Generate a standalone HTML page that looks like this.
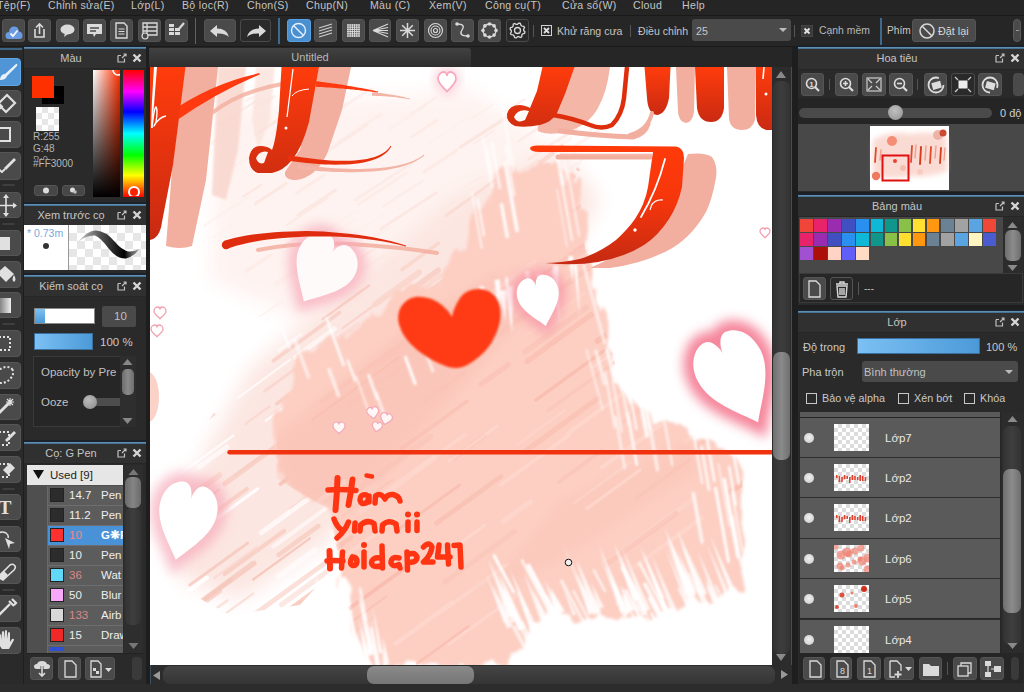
<!DOCTYPE html><html><head><meta charset="utf-8"><style>
html,body{margin:0;padding:0}
body{width:1024px;height:692px;overflow:hidden;position:relative;background:#1e1e1e;font-family:"Liberation Sans",sans-serif}
div{box-sizing:border-box}
svg{overflow:visible}
</style></head><body><div style="position:absolute;left:0px;top:0px;width:1024px;height:15px;background:#252525"></div><div style="position:absolute;left:0px;top:15px;width:1024px;height:1px;background:#1a1a1a"></div><div style="position:absolute;left:-3px;top:-1.17px;font-size:10.6px;line-height:12.19px;color:#c4c4c4;white-space:nowrap;letter-spacing:0.3px">Tệp(F)</div><div style="position:absolute;left:48px;top:-1.17px;font-size:10.6px;line-height:12.19px;color:#c4c4c4;white-space:nowrap;letter-spacing:0.3px">Chỉnh sửa(E)</div><div style="position:absolute;left:131px;top:-1.17px;font-size:10.6px;line-height:12.19px;color:#c4c4c4;white-space:nowrap;letter-spacing:0.3px">Lớp(L)</div><div style="position:absolute;left:182px;top:-1.17px;font-size:10.6px;line-height:12.19px;color:#c4c4c4;white-space:nowrap;letter-spacing:0.3px">Bộ lọc(R)</div><div style="position:absolute;left:247px;top:-1.17px;font-size:10.6px;line-height:12.19px;color:#c4c4c4;white-space:nowrap;letter-spacing:0.3px">Chọn(S)</div><div style="position:absolute;left:306px;top:-1.17px;font-size:10.6px;line-height:12.19px;color:#c4c4c4;white-space:nowrap;letter-spacing:0.3px">Chụp(N)</div><div style="position:absolute;left:370px;top:-1.17px;font-size:10.6px;line-height:12.19px;color:#c4c4c4;white-space:nowrap;letter-spacing:0.3px">Màu (C)</div><div style="position:absolute;left:429px;top:-1.17px;font-size:10.6px;line-height:12.19px;color:#c4c4c4;white-space:nowrap;letter-spacing:0.3px">Xem(V)</div><div style="position:absolute;left:485px;top:-1.17px;font-size:10.6px;line-height:12.19px;color:#c4c4c4;white-space:nowrap;letter-spacing:0.3px">Công cụ(T)</div><div style="position:absolute;left:562px;top:-1.17px;font-size:10.6px;line-height:12.19px;color:#c4c4c4;white-space:nowrap;letter-spacing:0.3px">Cửa sổ(W)</div><div style="position:absolute;left:633px;top:-1.17px;font-size:10.6px;line-height:12.19px;color:#c4c4c4;white-space:nowrap;letter-spacing:0.3px">Cloud</div><div style="position:absolute;left:682px;top:-1.17px;font-size:10.6px;line-height:12.19px;color:#c4c4c4;white-space:nowrap;letter-spacing:0.3px">Help</div><div style="position:absolute;left:0px;top:16px;width:1024px;height:30px;background:#262626"></div><div style="position:absolute;left:0px;top:46px;width:1024px;height:1px;background:#1a1a1a"></div><div style="position:absolute;left:2px;top:19px;width:23px;height:23px;background:#4a4a4a;border:1px solid #545454;border-radius:3px"><svg width="21" height="21" viewBox="0 0 21 21" style="position:absolute;left:0;top:0"><path d="M5.5 19 Q2.5 19 2.5 15.5 Q2.5 12 6 12 Q6.5 6.5 11 6.5 Q15.5 6.5 16 11.5 Q19.5 12 19.5 15.5 Q19.5 19 16.5 19 Z" fill="#6a9ae0"/><path d="M7.5 13.5 L10 16 L14.5 10.5" stroke="#f0f4ff" stroke-width="1.9" fill="none"/></svg></div><div style="position:absolute;left:28px;top:19px;width:23px;height:23px;background:#4a4a4a;border:1px solid #545454;border-radius:3px"><svg width="21" height="21" viewBox="0 0 21 21" style="position:absolute;left:0;top:0"><path d="M6 9 V17 H15 V9" stroke="#dadada" stroke-width="1.6" fill="none"/><path d="M10.5 14 V4 M7 7.5 L10.5 4 L14 7.5" stroke="#dadada" stroke-width="1.6" fill="none"/></svg></div><div style="position:absolute;left:56px;top:19px;width:23px;height:23px;background:#4a4a4a;border:1px solid #545454;border-radius:3px"><svg width="21" height="21" viewBox="0 0 21 21" style="position:absolute;left:0;top:0"><ellipse cx="10.5" cy="9.5" rx="7" ry="5" fill="#dadada"/><path d="M8 13 L7 17 L11 14" fill="#dadada"/></svg></div><div style="position:absolute;left:83px;top:19px;width:23px;height:23px;background:#4a4a4a;border:1px solid #545454;border-radius:3px"><svg width="21" height="21" viewBox="0 0 21 21" style="position:absolute;left:0;top:0"><path d="M3 4 H18 V14 H12 L10 17 L9 14 H3 Z" fill="#dadada"/><path d="M6 8 H15 M6 11 H12" stroke="#4a4a4a" stroke-width="1.4"/></svg></div><div style="position:absolute;left:110px;top:19px;width:23px;height:23px;background:#4a4a4a;border:1px solid #545454;border-radius:3px"><svg width="21" height="21" viewBox="0 0 21 21" style="position:absolute;left:0;top:0"><path d="M5 3 H13 L16 6 V18 H5 Z" stroke="#dadada" stroke-width="1.4" fill="none"/><path d="M7.5 9 H13.5 M7.5 11.5 H13.5 M7.5 14 H13.5" stroke="#dadada" stroke-width="1.2"/></svg></div><div style="position:absolute;left:138px;top:19px;width:23px;height:23px;background:#4a4a4a;border:1px solid #545454;border-radius:3px"><svg width="21" height="21" viewBox="0 0 21 21" style="position:absolute;left:0;top:0"><path d="M4 3 H18 V15 H4 Z M4 7 H18 M4 11 H18 M8 3 V15" stroke="#dadada" stroke-width="1.3" fill="none"/><circle cx="6" cy="16" r="3" stroke="#dadada" stroke-width="1.2" fill="#4a4a4a"/></svg></div><div style="position:absolute;left:165px;top:19px;width:23px;height:23px;background:#4a4a4a;border:1px solid #545454;border-radius:3px"><svg width="21" height="21" viewBox="0 0 21 21" style="position:absolute;left:0;top:0"><path d="M3 8 H8 V11 H3 Z M9 8 H14 V11 H9 Z M3 12 H8 V15 H3 Z M9 12 H14 V15 H9 Z M3 4 H8 V7 H3 Z" fill="#dadada"/><path d="M12 10 L18 3" stroke="#dadada" stroke-width="2.2"/></svg></div><div style="position:absolute;left:195px;top:18px;width:1px;height:26px;background:#3f6a90"></div><div style="position:absolute;left:204px;top:19px;width:32px;height:23px;background:#4a4a4a;border:1px solid #545454;border-radius:3px"><svg width="30" height="21" viewBox="0 0 30 21" style="position:absolute;left:0;top:0"><path d="M5 11 L12 5 V8.5 Q22 8.5 24 17 Q20 13 12 13.5 V17 Z" fill="#dadada"/></svg></div><div style="position:absolute;left:240px;top:19px;width:31px;height:23px;background:#2a2a2a;border:1px solid #4a4a4a;border-radius:3px"><svg width="29" height="21" viewBox="0 0 29 21" style="position:absolute;left:0;top:0"><path d="M25 11 L18 5 V8.5 Q8 8.5 6 17 Q10 13 18 13.5 V17 Z" fill="#dadada"/></svg></div><div style="position:absolute;left:278px;top:18px;width:2px;height:26px;background:#3f6a90"></div><div style="position:absolute;left:287px;top:19px;width:24px;height:23px;background:#4a90d0;border:1px solid #5aa0e0;border-radius:3px"><svg width="22" height="21" viewBox="0 0 22 21" style="position:absolute;left:0;top:0"><circle cx="10.5" cy="10.5" r="7" stroke="#e8f0ff" stroke-width="1.4" fill="none"/><path d="M5.5 5.5 L15.5 15.5" stroke="#e8f0ff" stroke-width="1.4"/></svg></div><div style="position:absolute;left:314px;top:19px;width:23px;height:23px;background:#4a4a4a;border:1px solid #545454;border-radius:3px"><svg width="21" height="21" viewBox="0 0 21 21" style="position:absolute;left:0;top:0"><path d="M4 8 L17 4 M4 11 L17 7 M4 14 L17 10 M4 17 L17 13" stroke="#cfcfcf" stroke-width="1.3"/></svg></div><div style="position:absolute;left:342px;top:19px;width:23px;height:23px;background:#4a4a4a;border:1px solid #545454;border-radius:3px"><svg width="21" height="21" viewBox="0 0 21 21" style="position:absolute;left:0;top:0"><path d="M5.0 4 V17" stroke="#dadada" stroke-width="1"/><path d="M7.2 4 V17" stroke="#dadada" stroke-width="1"/><path d="M9.4 4 V17" stroke="#dadada" stroke-width="1"/><path d="M11.600000000000001 4 V17" stroke="#dadada" stroke-width="1"/><path d="M13.8 4 V17" stroke="#dadada" stroke-width="1"/><path d="M16.0 4 V17" stroke="#dadada" stroke-width="1"/><path d="M4 5.0 H17" stroke="#dadada" stroke-width="1"/><path d="M4 7.2 H17" stroke="#dadada" stroke-width="1"/><path d="M4 9.4 H17" stroke="#dadada" stroke-width="1"/><path d="M4 11.600000000000001 H17" stroke="#dadada" stroke-width="1"/><path d="M4 13.8 H17" stroke="#dadada" stroke-width="1"/><path d="M4 16.0 H17" stroke="#dadada" stroke-width="1"/></svg></div><div style="position:absolute;left:369px;top:19px;width:22px;height:23px;background:#4a4a4a;border:1px solid #545454;border-radius:3px"><svg width="20" height="21" viewBox="0 0 20 21" style="position:absolute;left:0;top:0"><path d="M3 10.5 L18 4 M3 10.5 L18 7.5 M3 10.5 L18 10.5 M3 10.5 L18 13.5 M3 10.5 L18 17" stroke="#dadada" stroke-width="1.1"/></svg></div><div style="position:absolute;left:396px;top:19px;width:23px;height:23px;background:#4a4a4a;border:1px solid #545454;border-radius:3px"><svg width="21" height="21" viewBox="0 0 21 21" style="position:absolute;left:0;top:0"><path d="M10.5 3 V18 M3 10.5 H18 M5.2 5.2 L15.8 15.8 M15.8 5.2 L5.2 15.8" stroke="#dadada" stroke-width="1.5"/></svg></div><div style="position:absolute;left:424px;top:19px;width:23px;height:23px;background:#4a4a4a;border:1px solid #545454;border-radius:3px"><svg width="21" height="21" viewBox="0 0 21 21" style="position:absolute;left:0;top:0"><circle cx="10.5" cy="10.5" r="7" stroke="#dadada" stroke-width="1.1" fill="none"/><circle cx="10.5" cy="10.5" r="4.5" stroke="#dadada" stroke-width="1.1" fill="none"/><circle cx="10.5" cy="10.5" r="2" stroke="#dadada" stroke-width="1.1" fill="none"/></svg></div><div style="position:absolute;left:451px;top:19px;width:23px;height:23px;background:#4a4a4a;border:1px solid #545454;border-radius:3px"><svg width="21" height="21" viewBox="0 0 21 21" style="position:absolute;left:0;top:0"><path d="M5 4 Q14 4 10 10 Q6 16 16 16" stroke="#dadada" stroke-width="1.3" fill="none"/><circle cx="5" cy="4" r="1.8" fill="#dadada"/><circle cx="16" cy="16" r="1.8" fill="#dadada"/></svg></div><div style="position:absolute;left:478px;top:19px;width:23px;height:23px;background:#4a4a4a;border:1px solid #545454;border-radius:3px"><svg width="21" height="21" viewBox="0 0 21 21" style="position:absolute;left:0;top:0"><circle cx="10.5" cy="10.5" r="6.5" stroke="#dadada" stroke-width="1.3" fill="none"/><circle cx="17.00" cy="10.50" r="1.8" fill="#dadada"/><circle cx="15.10" cy="15.10" r="1.8" fill="#dadada"/><circle cx="10.50" cy="17.00" r="1.8" fill="#dadada"/><circle cx="5.90" cy="15.10" r="1.8" fill="#dadada"/><circle cx="4.00" cy="10.50" r="1.8" fill="#dadada"/><circle cx="5.90" cy="5.90" r="1.8" fill="#dadada"/><circle cx="10.50" cy="4.00" r="1.8" fill="#dadada"/><circle cx="15.10" cy="5.90" r="1.8" fill="#dadada"/></svg></div><div style="position:absolute;left:506px;top:19px;width:23px;height:23px;background:#2a2a2a;border:1px solid #4a4a4a;border-radius:3px"><svg width="21" height="21" viewBox="0 0 21 21" style="position:absolute;left:0;top:0"><path d="M16.70 10.50 L17.95 11.98 L17.52 13.41 L15.66 13.94 L14.88 14.88 L14.72 16.82 L13.41 17.52 L11.71 16.58 L10.50 16.70 L9.02 17.95 L7.59 17.52 L7.06 15.66 L6.12 14.88 L4.18 14.72 L3.48 13.41 L4.42 11.71 L4.30 10.50 L3.05 9.02 L3.48 7.59 L5.34 7.06 L6.12 6.12 L6.28 4.18 L7.59 3.48 L9.29 4.42 L10.50 4.30 L11.98 3.05 L13.41 3.48 L13.94 5.34 L14.88 6.12 L16.82 6.28 L17.52 7.59 L16.58 9.29 Z" stroke="#dadada" stroke-width="1.3" fill="none" stroke-linejoin="round"/><circle cx="10.5" cy="10.5" r="3" stroke="#dadada" stroke-width="1.3" fill="none"/></svg></div><div style="position:absolute;left:533px;top:25px;width:1px;height:12px;background:#555"></div><div style="position:absolute;left:541px;top:25px;width:11px;height:11px;border:1px solid #cfcfcf;background:#2b2b2b"><svg width="9" height="9" style="position:absolute;left:0;top:0"><path d="M2 2 L7 7 M7 2 L2 7" stroke="#e0e0e0" stroke-width="1.8"/></svg></div><div style="position:absolute;left:557px;top:25px;font-size:10.6px;line-height:12.19px;color:#c4c4c4;white-space:nowrap;">Khử răng cưa</div><div style="position:absolute;left:630px;top:25px;width:1px;height:12px;background:#555"></div><div style="position:absolute;left:638px;top:25px;font-size:10.6px;line-height:12.19px;color:#c4c4c4;white-space:nowrap;">Điều chỉnh</div><div style="position:absolute;left:692px;top:19px;width:99px;height:22px;background:#4a4a4a;border-radius:3px"></div><div style="position:absolute;left:696px;top:25px;font-size:10.6px;line-height:12.19px;color:#c8c8c8;white-space:nowrap;">25</div><svg style="position:absolute;left:779px;top:28px;" width="8" height="5" viewBox="0 0 8 5"><path d="M0 0 H8 L4 4 Z" fill="#bdbdbd"/></svg><div style="position:absolute;left:794px;top:25px;width:1px;height:12px;background:#555"></div><div style="position:absolute;left:801px;top:25px;width:12px;height:12px;background:#3a3a3a;border:1px solid #444"><svg width="10" height="10" style="position:absolute;left:0;top:0"><path d="M2.5 2.5 L7.5 7.5 M7.5 2.5 L2.5 7.5" stroke="#e6e6e6" stroke-width="1.8"/></svg></div><div style="position:absolute;left:819px;top:25px;font-size:10.4px;line-height:11.96px;color:#b8b8b8;white-space:nowrap;">Cạnh mềm</div><div style="position:absolute;left:880px;top:18px;width:2px;height:27px;background:#3f6a90"></div><div style="position:absolute;left:887px;top:25px;font-size:10.2px;line-height:11.73px;color:#d0c8c0;white-space:nowrap;">Phím</div><div style="position:absolute;left:912px;top:19px;width:64px;height:23px;background:#4a4a4a;border-radius:3px;border:1px solid #555"><svg width="20" height="20" style="position:absolute;left:4px;top:1px"><circle cx="10" cy="10" r="7" stroke="#d8d8d8" stroke-width="1.5" fill="none"/><path d="M5 5 L15 15" stroke="#d8d8d8" stroke-width="1.5"/></svg></div><div style="position:absolute;left:938px;top:25px;font-size:10.8px;line-height:12.42px;color:#d8d8d8;white-space:nowrap;">Đặt lại</div><div style="position:absolute;left:1013px;top:19px;width:8px;height:23px;background:#4a4a4a;border-radius:4px;border:1px solid #5a5a5a"><div style="position:absolute;left:2px;top:10px;width:3px;height:1px;background:#999"></div></div><div style="position:absolute;left:0px;top:47px;width:23px;height:637px;background:#2a2a2a"></div><div style="position:absolute;left:0px;top:48px;width:22px;height:2px;background:#3d6585"></div><div style="position:absolute;left:-8px;top:58px;width:29px;height:28px;background:#5095d5;border:1px solid #60a5e5;border-radius:4px"><svg width="29" height="28" viewBox="-8 0 29 28" style="position:absolute;left:-1px;top:-1px"><path d="M0 21 Q1 16 5 16 L16 6 Q18 5 17 8 L7 18 Q6 22 0 22 Z" fill="#e8f0f8"/></svg></div><div style="position:absolute;left:-8px;top:90px;width:29px;height:27px;background:#4a4a4a;border:1px solid #555;border-radius:4px"><svg width="29" height="27" viewBox="-8 0 29 27" style="position:absolute;left:-1px;top:-1px"><path d="M-2 14 L7 5 L15 13 L6 22 Z" stroke="#e0e0e0" stroke-width="2.2" fill="none"/><path d="M-2 14 L2 18" stroke="#e0e0e0" stroke-width="4"/></svg></div><div style="position:absolute;left:-8px;top:121px;width:29px;height:27px;background:#4a4a4a;border:1px solid #555;border-radius:4px"><svg width="29" height="27" viewBox="-8 0 29 27" style="position:absolute;left:-1px;top:-1px"><rect x="-5" y="7" width="15" height="13" stroke="#e0e0e0" stroke-width="2" fill="none"/></svg></div><div style="position:absolute;left:-8px;top:152px;width:29px;height:28px;background:#4a4a4a;border:1px solid #555;border-radius:4px"><svg width="29" height="28" viewBox="-8 0 29 28" style="position:absolute;left:-1px;top:-1px"><path d="M4 16 L14 6 L16 8 L6 18 Z" fill="#e0e0e0"/><path d="M-3 16 L2 20 L5 17" stroke="#e0e0e0" stroke-width="2" fill="none"/></svg></div><div style="position:absolute;left:-8px;top:192px;width:29px;height:26px;background:#4a4a4a;border:1px solid #555;border-radius:4px"><svg width="29" height="26" viewBox="-8 0 29 26" style="position:absolute;left:-1px;top:-1px"><path d="M6 3 V24 M-4 13.5 H16" stroke="#e0e0e0" stroke-width="1.6"/><path d="M6 2 L3 6 H9 Z M6 25 L3 21 H9 Z M17 13.5 L13 10.5 V16.5 Z" fill="#e0e0e0"/></svg></div><div style="position:absolute;left:-8px;top:230px;width:29px;height:26px;background:#4a4a4a;border:1px solid #555;border-radius:4px"><svg width="29" height="26" viewBox="-8 0 29 26" style="position:absolute;left:-1px;top:-1px"><rect x="-5" y="7" width="15" height="13" fill="#e0e0e0"/></svg></div><div style="position:absolute;left:-8px;top:261px;width:29px;height:27px;background:#4a4a4a;border:1px solid #555;border-radius:4px"><svg width="29" height="27" viewBox="-8 0 29 27" style="position:absolute;left:-1px;top:-1px"><path d="M-3 12 L5 5 L14 13 L6 21 Z" fill="#e0e0e0"/><path d="M14 14 Q17 19 14 21 Q11 19 14 14" fill="#e0e0e0"/></svg></div><div style="position:absolute;left:-8px;top:292px;width:29px;height:26px;background:#4a4a4a;border:1px solid #555;border-radius:4px"><svg width="29" height="26" viewBox="-8 0 29 26" style="position:absolute;left:-1px;top:-1px"><defs><linearGradient id="tg" x1="0" x2="1"><stop offset="0" stop-color="#555"/><stop offset="1" stop-color="#eee"/></linearGradient></defs><rect x="-5" y="6" width="16" height="15" fill="url(#tg)"/></svg></div><div style="position:absolute;left:-8px;top:330px;width:29px;height:27px;background:#4a4a4a;border:1px solid #555;border-radius:4px"><svg width="29" height="27" viewBox="-8 0 29 27" style="position:absolute;left:-1px;top:-1px"><rect x="-5" y="7" width="15" height="13" stroke="#e0e0e0" stroke-width="2" fill="none" stroke-dasharray="2 2"/></svg></div><div style="position:absolute;left:-8px;top:362px;width:29px;height:27px;background:#4a4a4a;border:1px solid #555;border-radius:4px"><svg width="29" height="27" viewBox="-8 0 29 27" style="position:absolute;left:-1px;top:-1px"><ellipse cx="4" cy="13" rx="10" ry="7" stroke="#e0e0e0" stroke-width="2" fill="none" stroke-dasharray="2 2" transform="rotate(-35 4 13)"/></svg></div><div style="position:absolute;left:-8px;top:394px;width:29px;height:26px;background:#4a4a4a;border:1px solid #555;border-radius:4px"><svg width="29" height="26" viewBox="-8 0 29 26" style="position:absolute;left:-1px;top:-1px"><path d="M-4 22 L9 9" stroke="#e0e0e0" stroke-width="3"/><path d="M10 4 V12 M6 8 H14 M7 5 L13 11 M13 5 L7 11" stroke="#e0e0e0" stroke-width="1.2"/></svg></div><div style="position:absolute;left:-8px;top:424px;width:29px;height:27px;background:#4a4a4a;border:1px solid #555;border-radius:4px"><svg width="29" height="27" viewBox="-8 0 29 27" style="position:absolute;left:-1px;top:-1px"><rect x="-5" y="8" width="14" height="13" stroke="#e0e0e0" stroke-width="2" fill="none" stroke-dasharray="2 2"/><path d="M5 16 L14 7 L16 9 L7 18 Z" fill="#e0e0e0"/></svg></div><div style="position:absolute;left:-8px;top:456px;width:29px;height:27px;background:#4a4a4a;border:1px solid #555;border-radius:4px"><svg width="29" height="27" viewBox="-8 0 29 27" style="position:absolute;left:-1px;top:-1px"><rect x="-5" y="8" width="14" height="13" stroke="#e0e0e0" stroke-width="2" fill="none" stroke-dasharray="2 2"/><path d="M3 14 L10 7 L15 12 L8 19 Z" fill="#e0e0e0"/></svg></div><div style="position:absolute;left:-8px;top:494px;width:29px;height:26px;background:#4a4a4a;border:1px solid #555;border-radius:4px"><svg width="29" height="26" viewBox="-8 0 29 26" style="position:absolute;left:-1px;top:-1px"><text x="5" y="20" font-family="Liberation Serif" font-weight="bold" font-size="19" fill="#e0e0e0" text-anchor="middle">T</text></svg></div><div style="position:absolute;left:-8px;top:526px;width:29px;height:26px;background:#4a4a4a;border:1px solid #555;border-radius:4px"><svg width="29" height="26" viewBox="-8 0 29 26" style="position:absolute;left:-1px;top:-1px"><path d="M-4 10 Q0 4 6 7 Q9 9 8 12" stroke="#e0e0e0" stroke-width="1.5" fill="none"/><path d="M5 12 L15 17 L10 18 L9 23 Z" fill="#e0e0e0"/></svg></div><div style="position:absolute;left:-8px;top:557px;width:29px;height:27px;background:#4a4a4a;border:1px solid #555;border-radius:4px"><svg width="29" height="27" viewBox="-8 0 29 27" style="position:absolute;left:-1px;top:-1px"><path d="M-2 20 L10 8 Q13 6 15 9 Q16 11 14 13 L3 23 Z" stroke="#e0e0e0" stroke-width="1.6" fill="none"/><path d="M-2 20 L4 14 L8 18 L3 23 Z" fill="#e0e0e0"/></svg></div><div style="position:absolute;left:-8px;top:595px;width:29px;height:27px;background:#4a4a4a;border:1px solid #555;border-radius:4px"><svg width="29" height="27" viewBox="-8 0 29 27" style="position:absolute;left:-1px;top:-1px"><path d="M-3 22 L10 9" stroke="#e0e0e0" stroke-width="2.4" fill="none"/><path d="M9 6 L14 11 M12 4 L16 8 L14 10" stroke="#e0e0e0" stroke-width="2.2" fill="none"/></svg></div><div style="position:absolute;left:-8px;top:627px;width:29px;height:27px;background:#4a4a4a;border:1px solid #555;border-radius:4px"><svg width="29" height="27" viewBox="-8 0 29 27" style="position:absolute;left:-1px;top:-1px"><path d="M-1 14 L-1 8 Q0 6 1 8 L1 13 L2 5 Q3 3 4 5 L4 12 L5 4 Q6 2 7 4 L7 12 L8 6 Q9 4 10 6 L10 15 L12 12 Q14 11 14 13 L9 22 L2 22 Q-1 19 -1 14 Z" fill="#e0e0e0"/></svg></div><div style="position:absolute;left:2px;top:184px;width:13px;height:2px;background:#3e3e3e;border-radius:1px"></div><div style="position:absolute;left:2px;top:223px;width:13px;height:2px;background:#3e3e3e;border-radius:1px"></div><div style="position:absolute;left:2px;top:323px;width:13px;height:2px;background:#3e3e3e;border-radius:1px"></div><div style="position:absolute;left:2px;top:488px;width:13px;height:2px;background:#3e3e3e;border-radius:1px"></div><div style="position:absolute;left:2px;top:589px;width:13px;height:2px;background:#3e3e3e;border-radius:1px"></div><div style="position:absolute;left:24px;top:47px;width:122px;height:156px;background:#2a2a2a"></div><div style="position:absolute;left:24px;top:45px;width:122px;height:2px;background:#1c222a"></div><div style="position:absolute;left:24px;top:47px;width:122px;height:2px;background:linear-gradient(#6a9cc0,#3c6585)"></div><div style="position:absolute;left:24px;top:49px;width:122px;height:20px;background:#313030;border-bottom:1px solid #262626"></div><div style="position:absolute;left:24px;top:48px;width:94px;height:20px;text-align:center;font-size:11px;line-height:20px;color:#c4c4c4;white-space:nowrap">Màu</div><svg style="position:absolute;left:117px;top:53px;" width="10" height="10" viewBox="0 0 10 10"><path d="M1 2.5 V9 H7.5 V5.5" stroke="#c0c0c0" stroke-width="1.2" fill="none"/><path d="M1 2.5 H4 M5 5 L9 1 M6.5 1 H9 V3.5" stroke="#c0c0c0" stroke-width="1.2" fill="none"/></svg><svg style="position:absolute;left:132px;top:53px;" width="10" height="10" viewBox="0 0 10 10"><path d="M1.5 1.5 L8.5 8.5 M8.5 1.5 L1.5 8.5" stroke="#d4d4d4" stroke-width="2.4"/></svg><div style="position:absolute;left:42px;top:86px;width:22px;height:18px;background:#000"></div><div style="position:absolute;left:32px;top:76px;width:22px;height:22px;background:#ff3000"></div><div style="position:absolute;left:36px;top:107px;width:23px;height:24px;background:repeating-conic-gradient(#e6e6e6 0 25%,#ffffff 0 50%) 0 0/12px 12px"></div><div style="position:absolute;left:33px;top:131px;font-size:10px;line-height:11.5px;color:#b4b4b4;white-space:nowrap;">R:255</div><div style="position:absolute;left:33px;top:143px;font-size:10px;line-height:11.5px;color:#b4b4b4;white-space:nowrap;">G:48</div><div style="position:absolute;left:33px;top:155px;width:40px;height:4px;overflow:hidden"><div style="font-size:10px;line-height:11px;color:#999;position:absolute;top:0">B:0</div></div><div style="position:absolute;left:33px;top:158px;font-size:10px;line-height:11.5px;color:#b8b8b8;white-space:nowrap;">#FF3000</div><div style="position:absolute;left:34px;top:185px;width:24px;height:11px;background:#474747;border-radius:3px;border:1px solid #555"><svg width="22" height="9" style="position:absolute;left:0;top:0"><circle cx="11" cy="4.5" r="3" fill="#ddd"/></svg></div><div style="position:absolute;left:62px;top:185px;width:23px;height:11px;background:#474747;border-radius:3px;border:1px solid #555"><svg width="21" height="9" style="position:absolute;left:0;top:0"><circle cx="9.5" cy="4" r="2.5" fill="#ddd"/><circle cx="12" cy="6" r="1.8" fill="#bbb"/></svg></div><div style="position:absolute;left:93px;top:70px;width:27px;height:127px;background:linear-gradient(to bottom,rgba(0,0,0,0),#000),linear-gradient(to right,#fff,#ff3000)"></div><svg style="position:absolute;left:112px;top:64px;clip-path:inset(6px 4px 0 0)" width="12" height="12" viewBox="0 0 12 12"><circle cx="6" cy="6" r="5" stroke="#fff" stroke-width="1.6" fill="none"/></svg><div style="position:absolute;left:123px;top:70px;width:21px;height:127px;background:linear-gradient(to bottom,#ff0000 0%,#ff00ff 17%,#0000ff 33%,#00ffff 50%,#00ff00 67%,#ffff00 83%,#ff0000 100%)"></div><svg style="position:absolute;left:126px;top:184px;clip-path:inset(0 0 1px 0)" width="16" height="13" viewBox="0 0 16 13"><circle cx="8" cy="8" r="5" stroke="#fff" stroke-width="2" fill="#ff2000"/></svg><div style="position:absolute;left:24px;top:204px;width:122px;height:71px;background:#2a2a2a"></div><div style="position:absolute;left:24px;top:202px;width:122px;height:2px;background:#1c222a"></div><div style="position:absolute;left:24px;top:204px;width:122px;height:2px;background:linear-gradient(#6a9cc0,#3c6585)"></div><div style="position:absolute;left:24px;top:206px;width:122px;height:20px;background:#313030;border-bottom:1px solid #262626"></div><div style="position:absolute;left:24px;top:205px;width:94px;height:20px;text-align:center;font-size:11px;line-height:20px;color:#c4c4c4;white-space:nowrap">Xem trước cọ</div><svg style="position:absolute;left:117px;top:210px;" width="10" height="10" viewBox="0 0 10 10"><path d="M1 2.5 V9 H7.5 V5.5" stroke="#c0c0c0" stroke-width="1.2" fill="none"/><path d="M1 2.5 H4 M5 5 L9 1 M6.5 1 H9 V3.5" stroke="#c0c0c0" stroke-width="1.2" fill="none"/></svg><svg style="position:absolute;left:132px;top:210px;" width="10" height="10" viewBox="0 0 10 10"><path d="M1.5 1.5 L8.5 8.5 M8.5 1.5 L1.5 8.5" stroke="#d4d4d4" stroke-width="2.4"/></svg><div style="position:absolute;left:24px;top:225px;width:44px;height:45px;background:#fff"></div><div style="position:absolute;left:68px;top:225px;width:1px;height:45px;background:#999"></div><div style="position:absolute;left:69px;top:225px;width:77px;height:45px;background:repeating-conic-gradient(#e6e6e6 0 25%,#ffffff 0 50%) 0 0/16px 16px"></div><div style="position:absolute;left:27px;top:227px;font-size:10.5px;line-height:12.07px;color:#7aa8d8;white-space:nowrap;">* 0.73m</div><div style="position:absolute;left:43px;top:243px;width:6px;height:6px;background:#333;border-radius:50%"></div><svg style="position:absolute;left:0px;top:0px;" width="1" height="1" viewBox="0 0 1 1"><defs><linearGradient id="bp" gradientUnits="userSpaceOnUse" x1="78" y1="0" x2="140" y2="0"><stop offset="0" stop-color="#666" stop-opacity="0.3"/><stop offset="0.35" stop-color="#555"/><stop offset="0.75" stop-color="#000"/><stop offset="1" stop-color="#222" stop-opacity="0.3"/></linearGradient></defs><path d="M78 242 Q88 230 96 230.5 Q106 231 115 242 Q122 250 128 251.5 Q134 252 139 249 Q135 256 126 258.5 Q117 259 109 249 Q101 238 95 235.5 Q86 235 78 242 Z" fill="url(#bp)"/></svg><div style="position:absolute;left:24px;top:275px;width:122px;height:167px;background:#2a2a2a"></div><div style="position:absolute;left:24px;top:273px;width:122px;height:2px;background:#1c222a"></div><div style="position:absolute;left:24px;top:275px;width:122px;height:2px;background:linear-gradient(#6a9cc0,#3c6585)"></div><div style="position:absolute;left:24px;top:277px;width:122px;height:20px;background:#313030;border-bottom:1px solid #262626"></div><div style="position:absolute;left:24px;top:276px;width:94px;height:20px;text-align:center;font-size:11px;line-height:20px;color:#c4c4c4;white-space:nowrap">Kiểm soát cọ</div><svg style="position:absolute;left:117px;top:281px;" width="10" height="10" viewBox="0 0 10 10"><path d="M1 2.5 V9 H7.5 V5.5" stroke="#c0c0c0" stroke-width="1.2" fill="none"/><path d="M1 2.5 H4 M5 5 L9 1 M6.5 1 H9 V3.5" stroke="#c0c0c0" stroke-width="1.2" fill="none"/></svg><svg style="position:absolute;left:132px;top:281px;" width="10" height="10" viewBox="0 0 10 10"><path d="M1.5 1.5 L8.5 8.5 M8.5 1.5 L1.5 8.5" stroke="#d4d4d4" stroke-width="2.4"/></svg><div style="position:absolute;left:34px;top:308px;width:61px;height:16px;background:#fff;border:1px solid #888"></div><div style="position:absolute;left:35px;top:309px;width:10px;height:14px;background:linear-gradient(#7ec0f0,#4a9ad8)"></div><div style="position:absolute;left:102px;top:306px;width:34px;height:21px;background:#4a4a4a;border-radius:2px"></div><div style="position:absolute;left:114px;top:310px;font-size:11.5px;line-height:13.22px;color:#c0c0c0;white-space:nowrap;">10</div><div style="position:absolute;left:34px;top:333px;width:59px;height:17px;background:linear-gradient(to right,#7cc0f4,#4b9ad8);border:1px solid #3a70a0"></div><div style="position:absolute;left:100px;top:336px;font-size:11.5px;line-height:13.22px;color:#c8c8c8;white-space:nowrap;">100 %</div><div style="position:absolute;left:33px;top:356px;width:103px;height:71px;background:#262626;border:1px solid #3a3a3a"></div><div style="position:absolute;left:41px;top:366px;font-size:11.5px;line-height:13.22px;color:#c0c0c0;white-space:nowrap;">Opacity by Pre</div><div style="position:absolute;left:41px;top:396px;font-size:11.5px;line-height:13.22px;color:#c0c0c0;white-space:nowrap;">Ooze</div><div style="position:absolute;left:92px;top:398px;width:30px;height:8px;background:#4d4d4d"></div><div style="position:absolute;left:83px;top:395px;width:14px;height:14px;background:radial-gradient(circle at 40% 35%,#bbb,#8a8a8a);border-radius:50%"></div><div style="position:absolute;left:120px;top:356px;width:16px;height:71px;background:#2e2e2e"></div><svg style="position:absolute;left:122px;top:358px;" width="11" height="8" viewBox="0 0 11 8"><path d="M0.5 7 L5.5 1 L10.5 7 Z" fill="#888"/></svg><div style="position:absolute;left:122px;top:369px;width:12px;height:26px;background:linear-gradient(to right,#6e6e6e,#8a8a8a,#6e6e6e);border-radius:5px"></div><svg style="position:absolute;left:122px;top:417px;" width="11" height="8" viewBox="0 0 11 8"><path d="M0.5 1 L5.5 7 L10.5 1 Z" fill="#888"/></svg><div style="position:absolute;left:24px;top:442px;width:122px;height:242px;background:#2a2a2a"></div><div style="position:absolute;left:24px;top:440px;width:122px;height:2px;background:#1c222a"></div><div style="position:absolute;left:24px;top:442px;width:122px;height:2px;background:linear-gradient(#6a9cc0,#3c6585)"></div><div style="position:absolute;left:24px;top:444px;width:122px;height:20px;background:#313030;border-bottom:1px solid #262626"></div><div style="position:absolute;left:24px;top:443px;width:94px;height:20px;text-align:center;font-size:11px;line-height:20px;color:#c4c4c4;white-space:nowrap">Cọ: G Pen</div><svg style="position:absolute;left:117px;top:448px;" width="10" height="10" viewBox="0 0 10 10"><path d="M1 2.5 V9 H7.5 V5.5" stroke="#c0c0c0" stroke-width="1.2" fill="none"/><path d="M1 2.5 H4 M5 5 L9 1 M6.5 1 H9 V3.5" stroke="#c0c0c0" stroke-width="1.2" fill="none"/></svg><svg style="position:absolute;left:132px;top:448px;" width="10" height="10" viewBox="0 0 10 10"><path d="M1.5 1.5 L8.5 8.5 M8.5 1.5 L1.5 8.5" stroke="#d4d4d4" stroke-width="2.4"/></svg><div style="position:absolute;left:27px;top:465px;width:96px;height:188px;background:#4f4f4f"></div><div style="position:absolute;left:27px;top:465px;width:96px;height:20px;background:#e6e6e6"><svg width="12" height="10" style="position:absolute;left:6px;top:5px"><path d="M0 0 H11 L5.5 9 Z" fill="#111"/></svg></div><div style="position:absolute;left:50px;top:469px;font-size:11.5px;line-height:13.22px;color:#222;white-space:nowrap;">Used [9]</div><div style="position:absolute;left:48px;top:486px;width:75px;height:20px;background:#5c5c5c;border-bottom:1px solid #6e6e6e;overflow:hidden"><div style="position:absolute;left:2px;top:2px;width:14px;height:14px;background:#2c2c2c;border:1px solid #222"></div><div style="position:absolute;left:21px;top:3px;font-size:11.5px;line-height:13px;color:#eee">14.7</div><div style="position:absolute;left:53px;top:3px;font-size:11.5px;line-height:13px;white-space:nowrap;color:#eee;">Pen</div></div><div style="position:absolute;left:48px;top:506px;width:75px;height:20px;background:#5c5c5c;border-bottom:1px solid #6e6e6e;overflow:hidden"><div style="position:absolute;left:2px;top:2px;width:14px;height:14px;background:#2c2c2c;border:1px solid #222"></div><div style="position:absolute;left:21px;top:3px;font-size:11.5px;line-height:13px;color:#eee">11.2</div><div style="position:absolute;left:53px;top:3px;font-size:11.5px;line-height:13px;white-space:nowrap;color:#eee;">Pen</div></div><div style="position:absolute;left:48px;top:526px;width:75px;height:20px;background:#4a92d8;border-bottom:1px solid #6e6e6e;overflow:hidden"><div style="position:absolute;left:2px;top:2px;width:14px;height:14px;background:#ff3030;border:1px solid #222"></div><div style="position:absolute;left:21px;top:3px;font-size:11.5px;line-height:13px;color:#e88">10</div><div style="position:absolute;left:53px;top:3px;font-size:11.5px;line-height:13px;white-space:nowrap;color:#fff;font-weight:bold">G&#10059;Pen</div></div><div style="position:absolute;left:48px;top:546px;width:75px;height:20px;background:#5c5c5c;border-bottom:1px solid #6e6e6e;overflow:hidden"><div style="position:absolute;left:2px;top:2px;width:14px;height:14px;background:#2c2c2c;border:1px solid #222"></div><div style="position:absolute;left:21px;top:3px;font-size:11.5px;line-height:13px;color:#eee">10</div><div style="position:absolute;left:53px;top:3px;font-size:11.5px;line-height:13px;white-space:nowrap;color:#eee;">Pen</div></div><div style="position:absolute;left:48px;top:566px;width:75px;height:20px;background:#5c5c5c;border-bottom:1px solid #6e6e6e;overflow:hidden"><div style="position:absolute;left:2px;top:2px;width:14px;height:14px;background:#60d8f8;border:1px solid #222"></div><div style="position:absolute;left:21px;top:3px;font-size:11.5px;line-height:13px;color:#d88">36</div><div style="position:absolute;left:53px;top:3px;font-size:11.5px;line-height:13px;white-space:nowrap;color:#eee;">Wat</div></div><div style="position:absolute;left:48px;top:586px;width:75px;height:20px;background:#5c5c5c;border-bottom:1px solid #6e6e6e;overflow:hidden"><div style="position:absolute;left:2px;top:2px;width:14px;height:14px;background:#f8a8f8;border:1px solid #222"></div><div style="position:absolute;left:21px;top:3px;font-size:11.5px;line-height:13px;color:#eee">50</div><div style="position:absolute;left:53px;top:3px;font-size:11.5px;line-height:13px;white-space:nowrap;color:#eee;">Blur</div></div><div style="position:absolute;left:48px;top:606px;width:75px;height:20px;background:#5c5c5c;border-bottom:1px solid #6e6e6e;overflow:hidden"><div style="position:absolute;left:2px;top:2px;width:14px;height:14px;background:#d8d8d8;border:1px solid #222"></div><div style="position:absolute;left:21px;top:3px;font-size:11.5px;line-height:13px;color:#d88">133</div><div style="position:absolute;left:53px;top:3px;font-size:11.5px;line-height:13px;white-space:nowrap;color:#eee;">Airb</div></div><div style="position:absolute;left:48px;top:626px;width:75px;height:20px;background:#5c5c5c;border-bottom:1px solid #6e6e6e;overflow:hidden"><div style="position:absolute;left:2px;top:2px;width:14px;height:14px;background:#f02828;border:1px solid #222"></div><div style="position:absolute;left:21px;top:3px;font-size:11.5px;line-height:13px;color:#eee">15</div><div style="position:absolute;left:53px;top:3px;font-size:11.5px;line-height:13px;white-space:nowrap;color:#eee;">Draw</div></div><div style="position:absolute;left:48px;top:646px;width:75px;height:7px;background:#5c5c5c"><div style="position:absolute;left:2px;top:1px;width:14px;height:4px;background:#3050d0"></div></div><div style="position:absolute;left:47px;top:486px;width:1px;height:167px;background:#6a6a6a"></div><div style="position:absolute;left:124px;top:465px;width:19px;height:188px;background:#2e2e2e"></div><svg style="position:absolute;left:128px;top:468px;" width="11" height="8" viewBox="0 0 11 8"><path d="M0.5 7 L5.5 1 L10.5 7 Z" fill="#777"/></svg><div style="position:absolute;left:125px;top:477px;width:16px;height:31px;background:linear-gradient(to right,#6a6a6a,#858585,#6a6a6a);border-radius:6px"></div><div style="position:absolute;left:125px;top:508px;width:16px;height:117px;background:linear-gradient(to right,#333,#3e3e3e,#333);border-radius:6px"></div><svg style="position:absolute;left:128px;top:642px;" width="11" height="8" viewBox="0 0 11 8"><path d="M0.5 1 L5.5 7 L10.5 1 Z" fill="#777"/></svg><div style="position:absolute;left:27px;top:653px;width:116px;height:1px;background:#222"></div><div style="position:absolute;left:30px;top:657px;width:23px;height:23px;background:#4a4a4a;border:1px solid #545454;border-radius:3px"><svg width="21" height="21" viewBox="0 0 21 21" style="position:absolute;left:0;top:0"><path d="M6 11 Q3 11 3 8.5 Q3 6 6 6 Q7 3 11 3 Q15 3 16 6 Q19 6 19 8.5 Q19 11 16 11 Z" fill="#dadada"/><path d="M11 8 V18 M8 15 L11 18 L14 15" stroke="#4a4a4a" stroke-width="3" fill="none"/><path d="M11 8 V18 M8 15 L11 18 L14 15" stroke="#dadada" stroke-width="1.6" fill="none"/></svg></div><div style="position:absolute;left:58px;top:657px;width:23px;height:23px;background:#4a4a4a;border:1px solid #545454;border-radius:3px"><svg width="21" height="21" viewBox="0 0 21 21" style="position:absolute;left:0;top:0"><path d="M6 3 H13 L17 7 V19 H6 Z" stroke="#dadada" stroke-width="1.3" fill="none"/></svg></div><div style="position:absolute;left:85px;top:657px;width:30px;height:23px;background:#4a4a4a;border:1px solid #545454;border-radius:3px"><svg width="28" height="21" viewBox="0 0 28 21" style="position:absolute;left:0;top:0"><path d="M5 3 H12 L15 6 V19 H5 Z" stroke="#dadada" stroke-width="1.3" fill="none"/><rect x="7" y="10" width="3" height="3" fill="#dadada"/><rect x="10" y="13" width="3" height="3" fill="#dadada"/><path d="M19 10 H26 L22.5 14 Z" fill="#dadada"/></svg></div><div style="position:absolute;left:132px;top:657px;width:10px;height:23px;background:#3a3a3a;border-radius:4px"></div><div style="position:absolute;left:147px;top:47px;width:650px;height:639px;background:#1e1e1e"></div><div style="position:absolute;left:149px;top:47px;width:643px;height:20px;background:#262626"></div><div style="position:absolute;left:149px;top:48px;width:322px;height:19px;background:linear-gradient(#414141,#2e2e2e);border-top-right-radius:3px"></div><div style="position:absolute;left:149px;top:48px;width:322px;height:19px;text-align:center;font-size:11px;line-height:19px;color:#b8b8b8">Untitled</div><div style="position:absolute;left:771px;top:67px;width:21px;height:598px;background:#2c2c2c;border-right:1px solid #3c5060"></div><svg style="position:absolute;left:775px;top:70px;" width="12" height="9" viewBox="0 0 12 9"><path d="M1 8 L6 1 L11 8 Z" fill="#8a8a8a"/></svg><div style="position:absolute;left:773px;top:81px;width:17px;height:573px;background:linear-gradient(to right,#333,#3d3d3d,#333);border-radius:7px"></div><div style="position:absolute;left:773px;top:352px;width:17px;height:108px;background:linear-gradient(to right,#6f6f6f,#8a8a8a,#6f6f6f);border-radius:7px"></div><svg style="position:absolute;left:775px;top:653px;" width="12" height="9" viewBox="0 0 12 9"><path d="M1 1 L6 8 L11 1 Z" fill="#8a8a8a"/></svg><div style="position:absolute;left:150px;top:665px;width:642px;height:20px;background:#2c2c2c;border-bottom:1px solid #3c5060;border-left:1px solid #3c5060"></div><svg style="position:absolute;left:152px;top:670px;" width="9" height="11" viewBox="0 0 9 11"><path d="M8 1 L1 5.5 L8 10 Z" fill="#9a9a9a"/></svg><div style="position:absolute;left:163px;top:666px;width:612px;height:18px;background:linear-gradient(#444,#353535);border-radius:7px"></div><div style="position:absolute;left:367px;top:666px;width:107px;height:18px;background:linear-gradient(#8a8a8a,#767676);border-radius:7px"></div><svg style="position:absolute;left:780px;top:669px;" width="9" height="11" viewBox="0 0 9 11"><path d="M1 1 L8 5.5 L1 10 Z" fill="#9a9a9a"/></svg><div style="position:absolute;left:0px;top:684px;width:1024px;height:8px;background:#2c2c2c"></div><svg style="position:absolute;left:150px;top:67px;overflow:hidden" width="622" height="598" viewBox="150 67 622 598"><defs>
<linearGradient id="rg" x1="0" y1="0" x2="0" y2="1"><stop offset="0" stop-color="#ff3c0c"/><stop offset="1" stop-color="#c92a12"/></linearGradient>
<linearGradient id="rg2" x1="0" y1="0" x2="0" y2="1"><stop offset="0" stop-color="#ff3c0c"/><stop offset="1" stop-color="#d22e10"/></linearGradient>
<linearGradient id="rg3" gradientUnits="userSpaceOnUse" x1="0" y1="150" x2="0" y2="265"><stop offset="0" stop-color="#ff3a0a"/><stop offset="0.45" stop-color="#f5360c"/><stop offset="1" stop-color="#c42a12"/></linearGradient>
<filter id="b2" x="-50%" y="-50%" width="200%" height="200%"><feGaussianBlur stdDeviation="2"/></filter>
<filter id="b6" x="-50%" y="-50%" width="200%" height="200%"><feGaussianBlur stdDeviation="6"/></filter>
<filter id="b10" x="-50%" y="-50%" width="200%" height="200%"><feGaussianBlur stdDeviation="10"/></filter>
<filter id="b1" x="-50%" y="-50%" width="200%" height="200%"><feGaussianBlur stdDeviation="0.8"/></filter>
<filter id="disp" x="-20%" y="-20%" width="140%" height="140%"><feTurbulence type="fractalNoise" baseFrequency="0.05 0.02" numOctaves="3" seed="4"/><feDisplacementMap in="SourceGraphic" scale="26" xChannelSelector="R" yChannelSelector="G"/><feGaussianBlur stdDeviation="1.5"/></filter>
<filter id="glow" x="-50%" y="-50%" width="200%" height="200%"><feGaussianBlur stdDeviation="6"/></filter>
</defs><rect x="150" y="67" width="622" height="598" fill="#ffffff"/><clipPath id="cpBand"><path d="M175 470 L250 360 L330 300 L450 200 L560 140 L600 200 L520 330 L420 430 L340 560 L300 605 L230 615 L175 585 Z"/></clipPath><clipPath id="cpTop"><path d="M210 100 L480 80 L600 130 L560 200 L420 260 L270 320 L200 300 Z"/></clipPath><clipPath id="cpSal"><path d="M470 230 L490 180 L506 170 L550 158 L578 172 L585 250 L605 330 L625 395 L665 425 L705 440 L732 455 L742 475 L745 590 L705 600 L650 615 L600 620 L545 612 L522 640 L515 665 L372 665 L345 600 L330 510 L276 478 L278 410 L300 350 L345 335 L385 310 L400 290 L440 285 L460 250 Z"/></clipPath><path d="M220 110 L470 90 L560 150 L470 250 L300 320 L210 280 Z" fill="#fef3f0" filter="url(#b10)"/><g clip-path="url(#cpTop)"><path d="M381.0 228.7 L436.5 192.7" stroke="#fbe0d9" stroke-width="2.7" stroke-linecap="round" opacity="0.64"/><path d="M276.0 284.9 L312.7 261.0" stroke="#fce8e3" stroke-width="3.0" stroke-linecap="round" opacity="0.34"/><path d="M321.4 120.9 L372.1 87.9" stroke="#fce8e3" stroke-width="3.2" stroke-linecap="round" opacity="0.54"/><path d="M358.5 204.2 L406.2 173.2" stroke="#fbe0d9" stroke-width="3.1" stroke-linecap="round" opacity="0.31"/><path d="M411.4 113.7 L436.1 97.6" stroke="#fce8e3" stroke-width="2.1" stroke-linecap="round" opacity="0.61"/><path d="M330.5 235.9 L355.5 219.7" stroke="#fdeee9" stroke-width="2.1" stroke-linecap="round" opacity="0.50"/><path d="M465.0 205.2 L493.4 186.7" stroke="#fce8e3" stroke-width="4.0" stroke-linecap="round" opacity="0.58"/><path d="M326.1 152.8 L355.0 134.1" stroke="#fce8e3" stroke-width="1.7" stroke-linecap="round" opacity="0.46"/><path d="M538.6 188.9 L595.6 151.9" stroke="#fce8e3" stroke-width="3.6" stroke-linecap="round" opacity="0.39"/><path d="M570.8 112.0 L603.3 90.9" stroke="#fdeee9" stroke-width="3.3" stroke-linecap="round" opacity="0.33"/><path d="M451.8 279.1 L479.9 260.8" stroke="#fdeee9" stroke-width="1.7" stroke-linecap="round" opacity="0.31"/><path d="M364.0 312.3 L386.4 297.7" stroke="#fce8e3" stroke-width="3.3" stroke-linecap="round" opacity="0.32"/><path d="M518.8 140.9 L559.0 114.7" stroke="#fce8e3" stroke-width="2.6" stroke-linecap="round" opacity="0.69"/><path d="M507.8 196.4 L540.7 175.1" stroke="#fce8e3" stroke-width="2.5" stroke-linecap="round" opacity="0.30"/><path d="M545.7 324.2 L587.4 297.2" stroke="#fce8e3" stroke-width="4.0" stroke-linecap="round" opacity="0.38"/><path d="M357.7 296.5 L401.4 268.1" stroke="#fce8e3" stroke-width="1.8" stroke-linecap="round" opacity="0.39"/><path d="M303.3 277.7 L333.9 257.9" stroke="#fce8e3" stroke-width="2.2" stroke-linecap="round" opacity="0.33"/><path d="M283.5 246.4 L300.9 235.1" stroke="#fbe0d9" stroke-width="2.4" stroke-linecap="round" opacity="0.48"/><path d="M583.7 211.3 L624.5 184.7" stroke="#fce8e3" stroke-width="3.7" stroke-linecap="round" opacity="0.55"/><path d="M324.3 152.5 L366.7 125.0" stroke="#fce8e3" stroke-width="3.3" stroke-linecap="round" opacity="0.60"/><path d="M576.2 145.2 L632.8 108.4" stroke="#fbe0d9" stroke-width="3.7" stroke-linecap="round" opacity="0.33"/><path d="M219.0 125.1 L257.2 100.2" stroke="#fbe0d9" stroke-width="2.1" stroke-linecap="round" opacity="0.58"/><path d="M302.8 289.5 L344.6 262.3" stroke="#fce8e3" stroke-width="2.2" stroke-linecap="round" opacity="0.67"/><path d="M590.9 129.1 L627.7 105.1" stroke="#fbe0d9" stroke-width="3.1" stroke-linecap="round" opacity="0.55"/><path d="M312.1 311.0 L337.4 294.5" stroke="#fdeee9" stroke-width="1.5" stroke-linecap="round" opacity="0.46"/><path d="M299.6 110.7 L328.2 92.1" stroke="#fce8e3" stroke-width="2.8" stroke-linecap="round" opacity="0.34"/><path d="M255.4 203.6 L286.0 183.7" stroke="#fbe0d9" stroke-width="3.3" stroke-linecap="round" opacity="0.53"/><path d="M256.1 108.1 L273.7 96.7" stroke="#fbe0d9" stroke-width="3.8" stroke-linecap="round" opacity="0.42"/><path d="M213.4 237.6 L233.3 224.7" stroke="#fdeee9" stroke-width="1.7" stroke-linecap="round" opacity="0.43"/><path d="M599.7 117.3 L639.4 91.5" stroke="#fbe0d9" stroke-width="3.3" stroke-linecap="round" opacity="0.59"/><path d="M251.8 321.6 L282.9 301.4" stroke="#fdeee9" stroke-width="1.7" stroke-linecap="round" opacity="0.66"/><path d="M548.4 195.9 L598.4 163.5" stroke="#fbe0d9" stroke-width="3.7" stroke-linecap="round" opacity="0.31"/><path d="M464.9 187.2 L482.2 176.0" stroke="#fce8e3" stroke-width="1.7" stroke-linecap="round" opacity="0.56"/><path d="M597.3 302.4 L644.6 271.6" stroke="#fbe0d9" stroke-width="2.5" stroke-linecap="round" opacity="0.58"/><path d="M383.1 206.4 L422.6 180.8" stroke="#fbe0d9" stroke-width="2.8" stroke-linecap="round" opacity="0.31"/><path d="M440.5 210.6 L466.9 193.5" stroke="#fdeee9" stroke-width="3.2" stroke-linecap="round" opacity="0.61"/><path d="M464.1 211.8 L518.4 176.5" stroke="#fce8e3" stroke-width="2.4" stroke-linecap="round" opacity="0.57"/><path d="M281.0 139.0 L335.8 103.5" stroke="#fdeee9" stroke-width="3.1" stroke-linecap="round" opacity="0.50"/><path d="M296.6 193.1 L323.9 175.4" stroke="#fce8e3" stroke-width="3.1" stroke-linecap="round" opacity="0.65"/><path d="M353.8 234.1 L383.8 214.6" stroke="#fdeee9" stroke-width="1.8" stroke-linecap="round" opacity="0.44"/><path d="M558.3 109.3 L577.7 96.7" stroke="#fce8e3" stroke-width="4.0" stroke-linecap="round" opacity="0.35"/><path d="M388.5 312.9 L440.2 279.4" stroke="#fbe0d9" stroke-width="2.5" stroke-linecap="round" opacity="0.50"/><path d="M326.1 293.0 L384.1 255.4" stroke="#fce8e3" stroke-width="2.6" stroke-linecap="round" opacity="0.63"/><path d="M311.2 239.7 L356.5 210.4" stroke="#fdeee9" stroke-width="2.2" stroke-linecap="round" opacity="0.42"/><path d="M516.6 104.4 L539.1 89.8" stroke="#fce8e3" stroke-width="2.6" stroke-linecap="round" opacity="0.61"/><path d="M306.6 279.2 L356.8 246.6" stroke="#fce8e3" stroke-width="4.0" stroke-linecap="round" opacity="0.48"/><path d="M452.0 250.7 L502.6 217.8" stroke="#fbe0d9" stroke-width="3.9" stroke-linecap="round" opacity="0.38"/><path d="M529.5 158.9 L576.3 128.5" stroke="#fbe0d9" stroke-width="3.4" stroke-linecap="round" opacity="0.59"/><path d="M271.6 162.6 L302.9 142.3" stroke="#fbe0d9" stroke-width="3.2" stroke-linecap="round" opacity="0.50"/><path d="M598.7 136.6 L651.1 102.6" stroke="#fce8e3" stroke-width="3.2" stroke-linecap="round" opacity="0.33"/><path d="M573.0 266.1 L595.3 251.7" stroke="#fbe0d9" stroke-width="2.6" stroke-linecap="round" opacity="0.65"/><path d="M202.7 226.5 L246.8 197.8" stroke="#fdeee9" stroke-width="2.8" stroke-linecap="round" opacity="0.49"/><path d="M460.5 147.1 L507.6 116.6" stroke="#fbe0d9" stroke-width="3.5" stroke-linecap="round" opacity="0.67"/><path d="M249.4 155.7 L282.5 134.2" stroke="#fdeee9" stroke-width="1.7" stroke-linecap="round" opacity="0.51"/><path d="M516.3 173.7 L571.2 138.0" stroke="#fdeee9" stroke-width="3.6" stroke-linecap="round" opacity="0.50"/><path d="M214.9 178.7 L249.3 156.3" stroke="#fce8e3" stroke-width="2.2" stroke-linecap="round" opacity="0.39"/><path d="M547.0 198.7 L565.3 186.8" stroke="#fbe0d9" stroke-width="2.8" stroke-linecap="round" opacity="0.62"/><path d="M256.2 134.2 L294.6 109.2" stroke="#fbe0d9" stroke-width="3.3" stroke-linecap="round" opacity="0.58"/><path d="M578.3 213.3 L634.9 176.6" stroke="#fce8e3" stroke-width="1.7" stroke-linecap="round" opacity="0.48"/><path d="M423.5 291.2 L463.8 265.0" stroke="#fbe0d9" stroke-width="1.9" stroke-linecap="round" opacity="0.64"/><path d="M424.0 171.7 L456.7 150.4" stroke="#fbe0d9" stroke-width="3.6" stroke-linecap="round" opacity="0.38"/><path d="M540.3 322.7 L579.1 297.6" stroke="#fce8e3" stroke-width="2.9" stroke-linecap="round" opacity="0.46"/><path d="M245.7 101.1 L278.3 80.0" stroke="#fce8e3" stroke-width="2.8" stroke-linecap="round" opacity="0.51"/><path d="M360.2 284.2 L400.6 258.0" stroke="#fbe0d9" stroke-width="2.7" stroke-linecap="round" opacity="0.37"/><path d="M572.3 205.6 L627.7 169.6" stroke="#fdeee9" stroke-width="3.5" stroke-linecap="round" opacity="0.41"/><path d="M389.3 129.2 L424.2 106.5" stroke="#fdeee9" stroke-width="3.5" stroke-linecap="round" opacity="0.51"/><path d="M243.4 196.5 L261.5 184.8" stroke="#fbe0d9" stroke-width="2.2" stroke-linecap="round" opacity="0.61"/><path d="M209.1 144.6 L235.4 127.6" stroke="#fdeee9" stroke-width="3.2" stroke-linecap="round" opacity="0.59"/><path d="M297.8 214.7 L335.5 190.2" stroke="#fbe0d9" stroke-width="3.0" stroke-linecap="round" opacity="0.55"/><path d="M487.1 261.3 L540.7 226.5" stroke="#fbe0d9" stroke-width="1.6" stroke-linecap="round" opacity="0.47"/><path d="M411.7 136.7 L437.1 120.3" stroke="#fbe0d9" stroke-width="3.1" stroke-linecap="round" opacity="0.39"/><path d="M286.5 224.9 L327.8 198.0" stroke="#fbe0d9" stroke-width="1.8" stroke-linecap="round" opacity="0.55"/><path d="M339.0 141.7 L381.1 114.3" stroke="#fce8e3" stroke-width="3.7" stroke-linecap="round" opacity="0.39"/><path d="M599.3 304.1 L621.7 289.6" stroke="#fbe0d9" stroke-width="2.1" stroke-linecap="round" opacity="0.34"/><path d="M355.2 200.0 L411.4 163.5" stroke="#fbe0d9" stroke-width="2.9" stroke-linecap="round" opacity="0.35"/><path d="M361.1 257.6 L378.6 246.2" stroke="#fbe0d9" stroke-width="2.0" stroke-linecap="round" opacity="0.44"/><path d="M528.4 183.1 L574.7 153.0" stroke="#fdeee9" stroke-width="3.1" stroke-linecap="round" opacity="0.50"/><path d="M474.3 143.5 L494.0 130.7" stroke="#fce8e3" stroke-width="1.8" stroke-linecap="round" opacity="0.60"/><path d="M445.3 308.2 L482.3 284.2" stroke="#fce8e3" stroke-width="2.0" stroke-linecap="round" opacity="0.38"/><path d="M536.1 327.8 L591.7 291.6" stroke="#fce8e3" stroke-width="1.7" stroke-linecap="round" opacity="0.35"/><path d="M472.4 117.8 L493.2 104.3" stroke="#fdeee9" stroke-width="2.5" stroke-linecap="round" opacity="0.51"/><path d="M372.0 238.2 L389.4 227.0" stroke="#fce8e3" stroke-width="3.3" stroke-linecap="round" opacity="0.37"/><path d="M381.6 270.0 L415.3 248.1" stroke="#fce8e3" stroke-width="2.0" stroke-linecap="round" opacity="0.34"/><path d="M516.9 174.5 L537.3 161.2" stroke="#fbe0d9" stroke-width="3.6" stroke-linecap="round" opacity="0.68"/><path d="M427.9 143.9 L469.2 117.1" stroke="#fdeee9" stroke-width="2.4" stroke-linecap="round" opacity="0.41"/><path d="M246.5 270.9 L270.0 255.6" stroke="#fce8e3" stroke-width="3.8" stroke-linecap="round" opacity="0.66"/><path d="M551.9 259.8 L600.9 228.0" stroke="#fdeee9" stroke-width="3.4" stroke-linecap="round" opacity="0.38"/><path d="M273.9 283.4 L303.4 264.3" stroke="#fdeee9" stroke-width="1.8" stroke-linecap="round" opacity="0.70"/><path d="M561.1 111.4 L589.3 93.1" stroke="#fdeee9" stroke-width="3.9" stroke-linecap="round" opacity="0.44"/><path d="M463.9 231.0 L503.0 205.6" stroke="#fdeee9" stroke-width="2.5" stroke-linecap="round" opacity="0.56"/></g><path d="M180 580 L240 600 L330 540 L420 430 L540 300 L600 200 L560 150 L450 200 L330 300 L250 370 L180 500 Z" fill="#fce6e1" filter="url(#b10)"/><g clip-path="url(#cpBand)"><path d="M482.6 530.9 L554.3 478.7" stroke="#f8cdc2" stroke-width="2.1" stroke-linecap="round" opacity="0.83"/><path d="M278.1 350.8 L300.9 334.2" stroke="#ffffff" stroke-width="2.8" stroke-linecap="round" opacity="0.50"/><path d="M278.9 287.8 L317.1 260.1" stroke="#ffffff" stroke-width="4.2" stroke-linecap="round" opacity="0.94"/><path d="M421.3 647.6 L475.0 608.5" stroke="#f8cdc2" stroke-width="5.2" stroke-linecap="round" opacity="0.75"/><path d="M467.5 627.7 L508.0 598.2" stroke="#ffffff" stroke-width="5.8" stroke-linecap="round" opacity="0.71"/><path d="M237.8 397.8 L290.2 359.7" stroke="#ffffff" stroke-width="2.2" stroke-linecap="round" opacity="0.69"/><path d="M402.3 448.9 L441.8 420.3" stroke="#f6c4b8" stroke-width="3.1" stroke-linecap="round" opacity="0.75"/><path d="M290.4 508.3 L326.2 482.3" stroke="#fad6cd" stroke-width="2.1" stroke-linecap="round" opacity="0.76"/><path d="M451.2 354.4 L507.4 313.6" stroke="#f6c4b8" stroke-width="2.2" stroke-linecap="round" opacity="0.84"/><path d="M183.1 644.4 L253.0 593.6" stroke="#fad6cd" stroke-width="2.3" stroke-linecap="round" opacity="0.69"/><path d="M379.7 636.6 L412.7 612.6" stroke="#ffffff" stroke-width="4.1" stroke-linecap="round" opacity="0.56"/><path d="M601.6 272.6 L659.0 230.9" stroke="#ffffff" stroke-width="2.2" stroke-linecap="round" opacity="0.71"/><path d="M253.7 176.0 L301.7 141.2" stroke="#ffffff" stroke-width="2.5" stroke-linecap="round" opacity="0.56"/><path d="M351.8 450.5 L405.7 411.4" stroke="#f6c4b8" stroke-width="4.7" stroke-linecap="round" opacity="0.85"/><path d="M404.2 648.8 L474.5 597.7" stroke="#fad6cd" stroke-width="4.9" stroke-linecap="round" opacity="0.72"/><path d="M391.4 304.3 L438.3 270.2" stroke="#f6c4b8" stroke-width="5.4" stroke-linecap="round" opacity="0.62"/><path d="M475.1 432.4 L526.5 395.1" stroke="#fad6cd" stroke-width="4.5" stroke-linecap="round" opacity="0.59"/><path d="M274.5 639.9 L342.9 590.2" stroke="#f8cdc2" stroke-width="5.5" stroke-linecap="round" opacity="0.78"/><path d="M164.4 279.8 L186.0 264.0" stroke="#fad6cd" stroke-width="2.2" stroke-linecap="round" opacity="0.74"/><path d="M193.3 193.2 L249.1 152.7" stroke="#f6c4b8" stroke-width="4.2" stroke-linecap="round" opacity="0.72"/><path d="M322.9 319.1 L369.1 285.5" stroke="#f8cdc2" stroke-width="2.5" stroke-linecap="round" opacity="0.86"/><path d="M365.8 561.0 L430.1 514.3" stroke="#ffffff" stroke-width="5.1" stroke-linecap="round" opacity="0.69"/><path d="M278.7 554.9 L318.3 526.1" stroke="#f6c4b8" stroke-width="4.6" stroke-linecap="round" opacity="0.63"/><path d="M509.1 563.1 L539.0 541.4" stroke="#f8cdc2" stroke-width="4.6" stroke-linecap="round" opacity="0.71"/><path d="M309.1 421.8 L352.1 390.6" stroke="#ffffff" stroke-width="4.3" stroke-linecap="round" opacity="0.63"/><path d="M516.7 188.0 L548.2 165.2" stroke="#f8cdc2" stroke-width="4.6" stroke-linecap="round" opacity="0.81"/><path d="M387.6 532.1 L425.1 504.9" stroke="#fad6cd" stroke-width="5.5" stroke-linecap="round" opacity="0.66"/><path d="M493.9 333.2 L520.3 314.0" stroke="#f6c4b8" stroke-width="4.8" stroke-linecap="round" opacity="0.70"/><path d="M529.4 302.4 L566.3 275.6" stroke="#fad6cd" stroke-width="3.6" stroke-linecap="round" opacity="0.54"/><path d="M541.1 162.1 L596.9 121.5" stroke="#fad6cd" stroke-width="4.3" stroke-linecap="round" opacity="0.83"/><path d="M329.4 345.1 L357.8 324.5" stroke="#fad6cd" stroke-width="4.4" stroke-linecap="round" opacity="0.58"/><path d="M509.1 590.4 L544.1 565.0" stroke="#f8cdc2" stroke-width="2.1" stroke-linecap="round" opacity="0.74"/><path d="M421.0 633.2 L475.5 593.6" stroke="#f8cdc2" stroke-width="5.2" stroke-linecap="round" opacity="0.76"/><path d="M300.5 422.7 L338.3 395.3" stroke="#f8cdc2" stroke-width="3.1" stroke-linecap="round" opacity="0.90"/><path d="M199.0 467.1 L226.8 446.9" stroke="#ffffff" stroke-width="5.0" stroke-linecap="round" opacity="0.61"/><path d="M261.4 532.7 L309.1 498.1" stroke="#ffffff" stroke-width="5.1" stroke-linecap="round" opacity="0.66"/><path d="M531.3 316.5 L558.8 296.6" stroke="#f8cdc2" stroke-width="4.0" stroke-linecap="round" opacity="0.82"/><path d="M580.9 355.3 L644.6 309.0" stroke="#f8cdc2" stroke-width="4.7" stroke-linecap="round" opacity="0.86"/><path d="M543.6 594.3 L614.2 543.0" stroke="#f6c4b8" stroke-width="4.6" stroke-linecap="round" opacity="0.82"/><path d="M529.0 360.8 L571.4 330.0" stroke="#fad6cd" stroke-width="2.6" stroke-linecap="round" opacity="0.95"/><path d="M332.7 233.8 L363.7 211.3" stroke="#f6c4b8" stroke-width="3.7" stroke-linecap="round" opacity="0.62"/><path d="M567.6 385.7 L626.3 343.1" stroke="#fad6cd" stroke-width="3.2" stroke-linecap="round" opacity="0.85"/><path d="M242.5 181.2 L286.9 149.0" stroke="#f8cdc2" stroke-width="4.3" stroke-linecap="round" opacity="0.64"/><path d="M250.9 329.7 L302.1 292.5" stroke="#ffffff" stroke-width="4.4" stroke-linecap="round" opacity="0.77"/><path d="M263.0 242.5 L298.0 217.1" stroke="#f6c4b8" stroke-width="2.7" stroke-linecap="round" opacity="0.78"/><path d="M593.3 425.2 L658.4 377.9" stroke="#ffffff" stroke-width="3.9" stroke-linecap="round" opacity="0.91"/><path d="M317.4 423.7 L387.9 372.4" stroke="#fad6cd" stroke-width="3.9" stroke-linecap="round" opacity="0.68"/><path d="M260.0 217.1 L322.2 172.0" stroke="#f6c4b8" stroke-width="5.9" stroke-linecap="round" opacity="0.85"/><path d="M186.7 612.1 L253.8 563.3" stroke="#f6c4b8" stroke-width="5.5" stroke-linecap="round" opacity="0.70"/><path d="M273.4 360.7 L339.6 312.6" stroke="#f6c4b8" stroke-width="3.7" stroke-linecap="round" opacity="0.57"/><path d="M577.7 555.0 L604.8 535.3" stroke="#f6c4b8" stroke-width="5.0" stroke-linecap="round" opacity="0.73"/><path d="M184.4 435.9 L214.0 414.4" stroke="#fad6cd" stroke-width="2.8" stroke-linecap="round" opacity="0.87"/><path d="M197.9 285.0 L255.8 242.9" stroke="#ffffff" stroke-width="2.4" stroke-linecap="round" opacity="0.81"/><path d="M198.1 524.3 L246.9 488.8" stroke="#f8cdc2" stroke-width="4.0" stroke-linecap="round" opacity="0.86"/><path d="M351.8 608.4 L376.8 590.2" stroke="#fad6cd" stroke-width="5.3" stroke-linecap="round" opacity="0.52"/><path d="M350.0 397.1 L420.1 346.2" stroke="#f6c4b8" stroke-width="5.9" stroke-linecap="round" opacity="0.64"/><path d="M195.0 302.9 L239.8 270.3" stroke="#f6c4b8" stroke-width="4.9" stroke-linecap="round" opacity="0.53"/><path d="M224.7 483.8 L280.4 443.3" stroke="#f8cdc2" stroke-width="5.0" stroke-linecap="round" opacity="0.79"/><path d="M165.7 338.6 L223.2 296.7" stroke="#f8cdc2" stroke-width="2.9" stroke-linecap="round" opacity="0.71"/><path d="M164.8 645.8 L227.1 600.6" stroke="#fad6cd" stroke-width="2.8" stroke-linecap="round" opacity="0.63"/><path d="M333.0 419.9 L368.9 393.8" stroke="#ffffff" stroke-width="3.3" stroke-linecap="round" opacity="0.75"/><path d="M200.0 244.3 L240.0 215.2" stroke="#f6c4b8" stroke-width="2.4" stroke-linecap="round" opacity="0.93"/><path d="M418.9 511.9 L456.6 484.5" stroke="#f8cdc2" stroke-width="5.3" stroke-linecap="round" opacity="0.55"/><path d="M446.0 215.7 L499.4 176.9" stroke="#fad6cd" stroke-width="2.7" stroke-linecap="round" opacity="0.68"/><path d="M545.0 446.4 L569.9 428.2" stroke="#fad6cd" stroke-width="2.9" stroke-linecap="round" opacity="0.94"/><path d="M359.6 535.6 L397.7 507.9" stroke="#fad6cd" stroke-width="5.3" stroke-linecap="round" opacity="0.79"/><path d="M512.8 560.6 L553.3 531.1" stroke="#ffffff" stroke-width="3.3" stroke-linecap="round" opacity="0.78"/><path d="M494.4 456.5 L531.3 429.7" stroke="#fad6cd" stroke-width="5.2" stroke-linecap="round" opacity="0.80"/><path d="M440.0 159.3 L477.6 131.9" stroke="#ffffff" stroke-width="3.4" stroke-linecap="round" opacity="0.55"/><path d="M333.7 404.7 L395.4 359.9" stroke="#fad6cd" stroke-width="5.3" stroke-linecap="round" opacity="0.61"/><path d="M407.9 299.2 L440.4 275.6" stroke="#fad6cd" stroke-width="4.4" stroke-linecap="round" opacity="0.76"/><path d="M251.2 616.8 L323.9 563.9" stroke="#fad6cd" stroke-width="4.8" stroke-linecap="round" opacity="0.76"/><path d="M172.3 479.7 L233.4 435.4" stroke="#ffffff" stroke-width="2.5" stroke-linecap="round" opacity="0.76"/><path d="M480.7 314.6 L549.7 264.4" stroke="#ffffff" stroke-width="3.4" stroke-linecap="round" opacity="0.90"/><path d="M368.1 514.9 L400.8 491.1" stroke="#f8cdc2" stroke-width="4.3" stroke-linecap="round" opacity="0.75"/><path d="M281.6 604.7 L354.0 552.1" stroke="#fad6cd" stroke-width="5.3" stroke-linecap="round" opacity="0.56"/><path d="M539.3 294.3 L606.7 245.3" stroke="#f6c4b8" stroke-width="3.0" stroke-linecap="round" opacity="0.87"/><path d="M245.4 423.9 L269.6 406.3" stroke="#fad6cd" stroke-width="2.1" stroke-linecap="round" opacity="0.85"/><path d="M587.8 649.4 L615.2 629.5" stroke="#ffffff" stroke-width="5.0" stroke-linecap="round" opacity="0.78"/><path d="M454.5 531.7 L483.1 510.9" stroke="#f8cdc2" stroke-width="3.6" stroke-linecap="round" opacity="0.56"/><path d="M337.7 434.8 L367.1 413.4" stroke="#f6c4b8" stroke-width="4.1" stroke-linecap="round" opacity="0.61"/><path d="M588.6 176.7 L650.0 132.1" stroke="#fad6cd" stroke-width="4.9" stroke-linecap="round" opacity="0.68"/><path d="M388.9 201.3 L427.3 173.4" stroke="#ffffff" stroke-width="5.6" stroke-linecap="round" opacity="0.84"/><path d="M383.5 647.3 L447.8 600.6" stroke="#ffffff" stroke-width="5.4" stroke-linecap="round" opacity="0.87"/><path d="M214.0 207.3 L283.6 156.7" stroke="#ffffff" stroke-width="3.3" stroke-linecap="round" opacity="0.69"/><path d="M171.1 603.6 L206.9 577.6" stroke="#ffffff" stroke-width="4.5" stroke-linecap="round" opacity="0.83"/><path d="M434.9 525.9 L471.1 499.6" stroke="#f8cdc2" stroke-width="4.4" stroke-linecap="round" opacity="0.61"/><path d="M548.4 271.2 L614.6 223.1" stroke="#ffffff" stroke-width="5.9" stroke-linecap="round" opacity="0.81"/><path d="M402.1 269.6 L438.4 243.2" stroke="#fad6cd" stroke-width="3.6" stroke-linecap="round" opacity="0.90"/><path d="M619.7 515.4 L685.7 467.4" stroke="#ffffff" stroke-width="3.5" stroke-linecap="round" opacity="0.75"/><path d="M235.5 474.8 L277.9 444.0" stroke="#f8cdc2" stroke-width="2.5" stroke-linecap="round" opacity="0.54"/><path d="M524.5 211.9 L573.0 176.7" stroke="#f8cdc2" stroke-width="5.8" stroke-linecap="round" opacity="0.63"/><path d="M495.0 162.0 L524.2 140.7" stroke="#ffffff" stroke-width="3.8" stroke-linecap="round" opacity="0.87"/><path d="M342.7 328.2 L393.8 291.2" stroke="#f8cdc2" stroke-width="2.2" stroke-linecap="round" opacity="0.70"/><path d="M304.3 312.2 L332.1 292.0" stroke="#ffffff" stroke-width="5.1" stroke-linecap="round" opacity="0.90"/><path d="M253.2 579.5 L309.9 538.4" stroke="#f6c4b8" stroke-width="2.2" stroke-linecap="round" opacity="0.88"/><path d="M322.9 386.2 L352.2 365.0" stroke="#fad6cd" stroke-width="5.5" stroke-linecap="round" opacity="0.74"/><path d="M268.7 624.7 L340.2 572.7" stroke="#f6c4b8" stroke-width="4.6" stroke-linecap="round" opacity="0.83"/><path d="M304.0 600.2 L369.9 552.2" stroke="#fad6cd" stroke-width="4.9" stroke-linecap="round" opacity="0.65"/><path d="M600.2 539.5 L642.3 508.9" stroke="#f6c4b8" stroke-width="2.7" stroke-linecap="round" opacity="0.55"/><path d="M477.9 284.5 L536.0 242.3" stroke="#f6c4b8" stroke-width="4.0" stroke-linecap="round" opacity="0.86"/><path d="M331.4 481.0 L398.1 432.5" stroke="#fad6cd" stroke-width="4.4" stroke-linecap="round" opacity="0.94"/><path d="M571.9 240.3 L604.0 217.0" stroke="#f8cdc2" stroke-width="2.5" stroke-linecap="round" opacity="0.71"/><path d="M195.1 608.6 L219.2 591.1" stroke="#f8cdc2" stroke-width="5.6" stroke-linecap="round" opacity="0.77"/><path d="M290.9 275.5 L353.4 230.1" stroke="#f6c4b8" stroke-width="2.3" stroke-linecap="round" opacity="0.94"/><path d="M247.2 239.7 L306.0 196.9" stroke="#fad6cd" stroke-width="2.1" stroke-linecap="round" opacity="0.94"/><path d="M175.5 380.8 L235.2 337.4" stroke="#ffffff" stroke-width="3.5" stroke-linecap="round" opacity="0.53"/><path d="M189.5 538.4 L257.5 488.9" stroke="#ffffff" stroke-width="3.3" stroke-linecap="round" opacity="0.85"/><path d="M397.7 402.8 L462.4 355.8" stroke="#fad6cd" stroke-width="4.7" stroke-linecap="round" opacity="0.77"/><path d="M514.8 206.1 L557.9 174.7" stroke="#f6c4b8" stroke-width="4.7" stroke-linecap="round" opacity="0.85"/><path d="M523.9 268.0 L569.9 234.6" stroke="#ffffff" stroke-width="2.9" stroke-linecap="round" opacity="0.62"/><path d="M253.2 635.3 L276.1 618.6" stroke="#fad6cd" stroke-width="3.8" stroke-linecap="round" opacity="0.65"/><path d="M439.8 454.3 L502.4 408.8" stroke="#f6c4b8" stroke-width="4.0" stroke-linecap="round" opacity="0.89"/><path d="M174.2 207.1 L203.8 185.6" stroke="#fad6cd" stroke-width="4.6" stroke-linecap="round" opacity="0.78"/><path d="M184.8 362.7 L241.6 321.4" stroke="#f6c4b8" stroke-width="5.3" stroke-linecap="round" opacity="0.84"/><path d="M389.2 475.0 L436.3 440.8" stroke="#fad6cd" stroke-width="3.5" stroke-linecap="round" opacity="0.57"/><path d="M477.7 565.5 L539.3 520.7" stroke="#ffffff" stroke-width="2.2" stroke-linecap="round" opacity="0.71"/><path d="M481.4 501.9 L551.9 450.6" stroke="#fad6cd" stroke-width="2.5" stroke-linecap="round" opacity="0.57"/><path d="M369.4 522.5 L391.7 506.3" stroke="#fad6cd" stroke-width="3.0" stroke-linecap="round" opacity="0.54"/><path d="M415.8 385.9 L485.2 335.5" stroke="#fad6cd" stroke-width="5.9" stroke-linecap="round" opacity="0.63"/><path d="M214.7 577.7 L256.9 547.0" stroke="#fad6cd" stroke-width="2.3" stroke-linecap="round" opacity="0.66"/><path d="M315.0 640.6 L367.4 602.6" stroke="#ffffff" stroke-width="2.2" stroke-linecap="round" opacity="0.76"/><path d="M617.6 518.7 L667.6 482.3" stroke="#fad6cd" stroke-width="5.6" stroke-linecap="round" opacity="0.71"/><path d="M340.7 571.5 L381.0 542.3" stroke="#fad6cd" stroke-width="5.1" stroke-linecap="round" opacity="0.69"/><path d="M273.4 546.6 L335.9 501.2" stroke="#ffffff" stroke-width="3.9" stroke-linecap="round" opacity="0.60"/><path d="M375.1 304.3 L418.9 272.5" stroke="#fad6cd" stroke-width="6.0" stroke-linecap="round" opacity="0.89"/><path d="M254.1 341.5 L278.2 324.0" stroke="#f6c4b8" stroke-width="4.8" stroke-linecap="round" opacity="0.93"/><path d="M445.6 409.5 L504.9 366.4" stroke="#fad6cd" stroke-width="4.0" stroke-linecap="round" opacity="0.62"/><path d="M326.1 226.8 L395.6 176.3" stroke="#fad6cd" stroke-width="3.4" stroke-linecap="round" opacity="0.83"/><path d="M577.3 160.2 L614.4 133.2" stroke="#f8cdc2" stroke-width="3.5" stroke-linecap="round" opacity="0.88"/><path d="M335.4 278.1 L401.9 229.9" stroke="#f6c4b8" stroke-width="4.7" stroke-linecap="round" opacity="0.68"/><path d="M269.6 170.4 L297.8 150.0" stroke="#f8cdc2" stroke-width="4.4" stroke-linecap="round" opacity="0.59"/><path d="M348.9 389.3 L405.6 348.1" stroke="#f6c4b8" stroke-width="4.1" stroke-linecap="round" opacity="0.64"/><path d="M367.8 338.5 L434.3 290.2" stroke="#ffffff" stroke-width="5.3" stroke-linecap="round" opacity="0.68"/><path d="M337.8 583.0 L369.9 559.7" stroke="#f6c4b8" stroke-width="3.2" stroke-linecap="round" opacity="0.78"/><path d="M224.5 574.1 L284.1 530.9" stroke="#f8cdc2" stroke-width="3.9" stroke-linecap="round" opacity="0.86"/><path d="M608.8 299.0 L664.3 258.7" stroke="#fad6cd" stroke-width="5.7" stroke-linecap="round" opacity="0.75"/><path d="M322.6 211.1 L383.5 166.8" stroke="#f6c4b8" stroke-width="3.5" stroke-linecap="round" opacity="0.54"/><path d="M356.7 346.2 L380.1 329.2" stroke="#f6c4b8" stroke-width="3.5" stroke-linecap="round" opacity="0.63"/><path d="M483.5 260.8 L552.4 210.8" stroke="#fad6cd" stroke-width="2.8" stroke-linecap="round" opacity="0.66"/><path d="M487.7 410.2 L546.9 367.1" stroke="#fad6cd" stroke-width="5.6" stroke-linecap="round" opacity="0.72"/><path d="M278.2 576.5 L314.7 550.0" stroke="#ffffff" stroke-width="5.7" stroke-linecap="round" opacity="0.55"/><path d="M578.5 606.2 L613.0 581.1" stroke="#f6c4b8" stroke-width="3.5" stroke-linecap="round" opacity="0.71"/><path d="M309.7 276.7 L331.2 261.1" stroke="#f6c4b8" stroke-width="3.4" stroke-linecap="round" opacity="0.75"/><path d="M280.5 484.0 L310.5 462.2" stroke="#f6c4b8" stroke-width="3.9" stroke-linecap="round" opacity="0.93"/><path d="M326.8 438.1 L396.6 387.4" stroke="#f8cdc2" stroke-width="5.1" stroke-linecap="round" opacity="0.78"/><path d="M349.0 357.8 L383.8 332.5" stroke="#ffffff" stroke-width="5.3" stroke-linecap="round" opacity="0.67"/><path d="M578.4 169.1 L605.8 149.2" stroke="#f6c4b8" stroke-width="4.0" stroke-linecap="round" opacity="0.72"/><path d="M377.6 160.6 L429.7 122.7" stroke="#f6c4b8" stroke-width="3.1" stroke-linecap="round" opacity="0.81"/><path d="M267.9 150.5 L316.7 115.0" stroke="#fad6cd" stroke-width="3.6" stroke-linecap="round" opacity="0.75"/><path d="M550.5 532.6 L574.9 514.9" stroke="#f6c4b8" stroke-width="5.3" stroke-linecap="round" opacity="0.62"/><path d="M207.8 159.7 L270.4 114.2" stroke="#ffffff" stroke-width="2.8" stroke-linecap="round" opacity="0.81"/><path d="M603.4 562.2 L632.0 541.4" stroke="#ffffff" stroke-width="4.5" stroke-linecap="round" opacity="0.86"/><path d="M295.1 357.4 L334.6 328.7" stroke="#ffffff" stroke-width="4.7" stroke-linecap="round" opacity="0.61"/><path d="M274.7 312.5 L304.3 291.0" stroke="#fad6cd" stroke-width="4.1" stroke-linecap="round" opacity="0.89"/><path d="M615.0 558.9 L681.8 510.4" stroke="#ffffff" stroke-width="3.2" stroke-linecap="round" opacity="0.73"/><path d="M472.5 170.2 L525.4 131.7" stroke="#ffffff" stroke-width="3.7" stroke-linecap="round" opacity="0.52"/><path d="M276.8 403.7 L338.9 358.6" stroke="#f6c4b8" stroke-width="3.6" stroke-linecap="round" opacity="0.67"/><path d="M474.1 241.8 L539.3 194.4" stroke="#fad6cd" stroke-width="2.8" stroke-linecap="round" opacity="0.76"/><path d="M353.5 503.5 L406.5 465.0" stroke="#fad6cd" stroke-width="5.3" stroke-linecap="round" opacity="0.56"/><path d="M333.4 484.7 L365.8 461.2" stroke="#f8cdc2" stroke-width="2.7" stroke-linecap="round" opacity="0.71"/><path d="M479.2 545.4 L548.2 495.2" stroke="#f6c4b8" stroke-width="3.1" stroke-linecap="round" opacity="0.69"/><path d="M450.5 348.4 L519.8 298.0" stroke="#f8cdc2" stroke-width="6.0" stroke-linecap="round" opacity="0.57"/><path d="M618.8 585.4 L649.2 563.3" stroke="#f8cdc2" stroke-width="3.4" stroke-linecap="round" opacity="0.68"/><path d="M576.2 566.4 L641.4 519.0" stroke="#f8cdc2" stroke-width="2.7" stroke-linecap="round" opacity="0.64"/><path d="M528.2 569.3 L563.4 543.8" stroke="#ffffff" stroke-width="3.6" stroke-linecap="round" opacity="0.84"/><path d="M611.2 344.7 L668.0 303.5" stroke="#fad6cd" stroke-width="4.2" stroke-linecap="round" opacity="0.70"/><path d="M543.6 428.1 L610.9 379.1" stroke="#ffffff" stroke-width="5.5" stroke-linecap="round" opacity="0.55"/><path d="M308.9 159.6 L358.9 123.3" stroke="#ffffff" stroke-width="2.6" stroke-linecap="round" opacity="0.62"/><path d="M264.7 391.1 L304.1 362.4" stroke="#f8cdc2" stroke-width="3.0" stroke-linecap="round" opacity="0.57"/><path d="M163.3 530.3 L218.8 490.0" stroke="#f6c4b8" stroke-width="2.0" stroke-linecap="round" opacity="0.72"/><path d="M618.7 251.1 L684.5 203.3" stroke="#ffffff" stroke-width="3.9" stroke-linecap="round" opacity="0.66"/><path d="M417.5 428.7 L449.0 405.8" stroke="#f6c4b8" stroke-width="4.5" stroke-linecap="round" opacity="0.62"/><path d="M591.9 582.3 L664.4 529.6" stroke="#f8cdc2" stroke-width="3.8" stroke-linecap="round" opacity="0.58"/><path d="M172.3 234.4 L198.8 215.2" stroke="#f6c4b8" stroke-width="2.3" stroke-linecap="round" opacity="0.51"/><path d="M415.6 181.5 L460.4 149.0" stroke="#f8cdc2" stroke-width="5.5" stroke-linecap="round" opacity="0.93"/><path d="M165.1 413.6 L227.9 368.0" stroke="#ffffff" stroke-width="5.2" stroke-linecap="round" opacity="0.68"/><path d="M529.4 563.8 L590.0 519.8" stroke="#f8cdc2" stroke-width="5.9" stroke-linecap="round" opacity="0.92"/><path d="M381.8 570.0 L423.5 539.7" stroke="#f8cdc2" stroke-width="5.6" stroke-linecap="round" opacity="0.50"/><path d="M224.8 311.8 L283.1 269.4" stroke="#f6c4b8" stroke-width="4.0" stroke-linecap="round" opacity="0.86"/><path d="M327.8 469.0 L366.6 440.8" stroke="#f6c4b8" stroke-width="3.1" stroke-linecap="round" opacity="0.77"/><path d="M281.7 256.8 L311.4 235.2" stroke="#fad6cd" stroke-width="2.2" stroke-linecap="round" opacity="0.75"/><path d="M472.9 238.6 L498.7 219.9" stroke="#f6c4b8" stroke-width="2.6" stroke-linecap="round" opacity="0.58"/><path d="M170.1 349.9 L193.1 333.2" stroke="#fad6cd" stroke-width="2.4" stroke-linecap="round" opacity="0.51"/><path d="M240.3 183.3 L291.5 146.1" stroke="#f6c4b8" stroke-width="4.3" stroke-linecap="round" opacity="0.69"/><path d="M602.8 259.8 L644.5 229.5" stroke="#fad6cd" stroke-width="4.8" stroke-linecap="round" opacity="0.87"/><path d="M192.2 345.1 L260.8 295.2" stroke="#f6c4b8" stroke-width="5.5" stroke-linecap="round" opacity="0.74"/><path d="M164.6 515.1 L219.7 475.1" stroke="#f8cdc2" stroke-width="5.6" stroke-linecap="round" opacity="0.60"/><path d="M443.5 593.8 L508.7 546.4" stroke="#f8cdc2" stroke-width="4.5" stroke-linecap="round" opacity="0.55"/><path d="M499.8 522.1 L543.0 490.7" stroke="#ffffff" stroke-width="3.9" stroke-linecap="round" opacity="0.73"/><path d="M332.7 420.6 L355.2 404.3" stroke="#ffffff" stroke-width="5.7" stroke-linecap="round" opacity="0.70"/><path d="M432.9 447.3 L502.2 397.0" stroke="#ffffff" stroke-width="2.6" stroke-linecap="round" opacity="0.65"/><path d="M277.8 461.4 L307.9 439.5" stroke="#ffffff" stroke-width="3.9" stroke-linecap="round" opacity="0.52"/><path d="M605.3 526.4 L672.8 477.4" stroke="#fad6cd" stroke-width="2.4" stroke-linecap="round" opacity="0.88"/><path d="M458.6 618.8 L522.5 572.5" stroke="#f6c4b8" stroke-width="5.2" stroke-linecap="round" opacity="0.95"/><path d="M189.8 585.0 L247.5 543.2" stroke="#f6c4b8" stroke-width="3.0" stroke-linecap="round" opacity="0.70"/><path d="M406.7 582.8 L437.2 560.6" stroke="#fad6cd" stroke-width="3.1" stroke-linecap="round" opacity="0.53"/><path d="M415.3 543.6 L461.3 510.1" stroke="#ffffff" stroke-width="3.0" stroke-linecap="round" opacity="0.88"/><path d="M514.6 424.6 L582.4 375.3" stroke="#fad6cd" stroke-width="5.2" stroke-linecap="round" opacity="0.87"/><path d="M242.1 316.9 L311.2 266.7" stroke="#fad6cd" stroke-width="5.8" stroke-linecap="round" opacity="0.88"/><path d="M214.0 240.9 L254.7 211.3" stroke="#ffffff" stroke-width="5.4" stroke-linecap="round" opacity="0.91"/><path d="M193.1 643.9 L224.2 621.3" stroke="#fad6cd" stroke-width="4.5" stroke-linecap="round" opacity="0.75"/><path d="M617.4 339.1 L680.6 293.2" stroke="#f6c4b8" stroke-width="4.8" stroke-linecap="round" opacity="0.80"/><path d="M255.9 254.8 L316.5 210.8" stroke="#ffffff" stroke-width="2.7" stroke-linecap="round" opacity="0.52"/><path d="M288.0 279.3 L326.3 251.5" stroke="#f6c4b8" stroke-width="4.5" stroke-linecap="round" opacity="0.59"/><path d="M617.6 495.8 L676.6 453.0" stroke="#f6c4b8" stroke-width="3.4" stroke-linecap="round" opacity="0.85"/><path d="M252.1 185.7 L286.3 160.9" stroke="#ffffff" stroke-width="3.5" stroke-linecap="round" opacity="0.63"/><path d="M221.5 211.8 L246.8 193.5" stroke="#ffffff" stroke-width="4.1" stroke-linecap="round" opacity="0.61"/><path d="M426.5 292.4 L492.6 244.4" stroke="#f8cdc2" stroke-width="3.1" stroke-linecap="round" opacity="0.80"/><path d="M369.3 616.8 L409.9 587.3" stroke="#fad6cd" stroke-width="5.0" stroke-linecap="round" opacity="0.70"/><path d="M189.5 359.5 L224.5 334.1" stroke="#f6c4b8" stroke-width="3.8" stroke-linecap="round" opacity="0.63"/><path d="M479.7 486.0 L512.8 462.0" stroke="#fad6cd" stroke-width="3.6" stroke-linecap="round" opacity="0.77"/><path d="M558.5 344.0 L593.3 318.7" stroke="#f8cdc2" stroke-width="2.4" stroke-linecap="round" opacity="0.75"/><path d="M205.7 598.3 L230.6 580.2" stroke="#f6c4b8" stroke-width="3.5" stroke-linecap="round" opacity="0.51"/><path d="M431.5 498.7 L503.8 446.1" stroke="#f8cdc2" stroke-width="5.3" stroke-linecap="round" opacity="0.80"/><path d="M231.6 186.3 L260.8 165.1" stroke="#ffffff" stroke-width="4.0" stroke-linecap="round" opacity="0.80"/><path d="M438.5 635.2 L510.1 583.2" stroke="#ffffff" stroke-width="6.0" stroke-linecap="round" opacity="0.70"/><path d="M265.8 420.7 L291.8 401.8" stroke="#ffffff" stroke-width="2.2" stroke-linecap="round" opacity="0.80"/><path d="M523.5 616.0 L571.0 581.5" stroke="#ffffff" stroke-width="4.3" stroke-linecap="round" opacity="0.67"/><path d="M225.8 347.3 L285.0 304.3" stroke="#fad6cd" stroke-width="2.3" stroke-linecap="round" opacity="0.93"/></g><path d="M470 230 L490 180 L506 170 L550 158 L578 172 L585 250 L605 330 L625 395 L665 425 L705 440 L732 455 L742 475 L745 590 L705 600 L650 615 L600 620 L545 612 L522 640 L515 665 L372 665 L345 600 L330 510 L276 478 L278 410 L300 350 L345 335 L385 310 L400 290 L440 285 L460 250 Z" fill="#fdcfc3" filter="url(#disp)"/><g clip-path="url(#cpSal)"><path d="M270 440 L290 520 L380 480 L520 320 L500 270 L420 320 Z" fill="#f9c0b2" opacity="0.55" filter="url(#b6)"/><path d="M480 600 L560 560 L700 470 L690 440 L560 500 Z" fill="#f9c4b6" opacity="0.45" filter="url(#b6)"/></g><g clip-path="url(#cpSal)"><path d="M611.0 558.9 L693.9 498.7" stroke="#fed8ce" stroke-width="4.7" stroke-linecap="round" opacity="0.61"/><path d="M703.2 375.2 L737.5 350.3" stroke="#fac4b7" stroke-width="3.5" stroke-linecap="round" opacity="0.83"/><path d="M709.0 162.6 L755.9 128.4" stroke="#fed8ce" stroke-width="4.1" stroke-linecap="round" opacity="0.84"/><path d="M650.4 199.0 L739.3 134.4" stroke="#f8bcae" stroke-width="4.3" stroke-linecap="round" opacity="0.66"/><path d="M333.6 195.9 L391.0 154.2" stroke="#f8bcae" stroke-width="3.2" stroke-linecap="round" opacity="0.51"/><path d="M472.8 178.2 L511.2 150.4" stroke="#fed8ce" stroke-width="3.8" stroke-linecap="round" opacity="0.45"/><path d="M337.5 617.2 L414.1 561.5" stroke="#f8bcae" stroke-width="4.0" stroke-linecap="round" opacity="0.84"/><path d="M527.2 361.4 L591.1 314.9" stroke="#f8bcae" stroke-width="5.5" stroke-linecap="round" opacity="0.59"/><path d="M275.2 229.9 L352.5 173.8" stroke="#fed8ce" stroke-width="4.9" stroke-linecap="round" opacity="0.57"/><path d="M414.1 471.7 L464.6 435.0" stroke="#fed8ce" stroke-width="4.0" stroke-linecap="round" opacity="0.69"/><path d="M685.4 174.0 L736.6 136.8" stroke="#fac4b7" stroke-width="2.3" stroke-linecap="round" opacity="0.64"/><path d="M592.0 368.0 L674.2 308.2" stroke="#fed8ce" stroke-width="2.8" stroke-linecap="round" opacity="0.83"/><path d="M548.3 410.5 L631.0 350.4" stroke="#fac4b7" stroke-width="3.6" stroke-linecap="round" opacity="0.52"/><path d="M563.9 264.4 L593.6 242.8" stroke="#fac4b7" stroke-width="5.2" stroke-linecap="round" opacity="0.56"/><path d="M480.9 384.4 L508.4 364.5" stroke="#f8bcae" stroke-width="5.3" stroke-linecap="round" opacity="0.47"/><path d="M457.3 317.8 L534.5 261.7" stroke="#fed8ce" stroke-width="4.7" stroke-linecap="round" opacity="0.57"/><path d="M424.1 401.7 L463.2 373.2" stroke="#fac4b7" stroke-width="5.0" stroke-linecap="round" opacity="0.73"/><path d="M453.0 458.5 L484.0 435.9" stroke="#fac4b7" stroke-width="4.8" stroke-linecap="round" opacity="0.83"/><path d="M449.2 461.0 L497.3 426.0" stroke="#fed8ce" stroke-width="3.2" stroke-linecap="round" opacity="0.74"/><path d="M297.5 245.5 L329.4 222.3" stroke="#fac4b7" stroke-width="5.0" stroke-linecap="round" opacity="0.42"/><path d="M315.5 281.0 L357.2 250.7" stroke="#fac4b7" stroke-width="5.2" stroke-linecap="round" opacity="0.69"/><path d="M452.9 196.7 L514.2 152.1" stroke="#fac4b7" stroke-width="2.4" stroke-linecap="round" opacity="0.84"/><path d="M677.5 320.7 L722.3 288.1" stroke="#fac4b7" stroke-width="5.3" stroke-linecap="round" opacity="0.69"/><path d="M297.8 547.1 L325.2 527.2" stroke="#fed8ce" stroke-width="4.5" stroke-linecap="round" opacity="0.46"/><path d="M436.6 523.2 L500.8 476.6" stroke="#f8bcae" stroke-width="4.7" stroke-linecap="round" opacity="0.66"/><path d="M272.7 533.2 L324.1 495.9" stroke="#f8bcae" stroke-width="4.7" stroke-linecap="round" opacity="0.48"/><path d="M310.9 506.4 L344.2 482.2" stroke="#fed8ce" stroke-width="5.0" stroke-linecap="round" opacity="0.60"/><path d="M327.8 316.4 L399.6 264.2" stroke="#f8bcae" stroke-width="2.3" stroke-linecap="round" opacity="0.83"/><path d="M444.4 582.5 L514.8 531.3" stroke="#fac4b7" stroke-width="4.8" stroke-linecap="round" opacity="0.54"/><path d="M737.4 441.3 L821.4 380.3" stroke="#fac4b7" stroke-width="2.8" stroke-linecap="round" opacity="0.55"/><path d="M338.6 642.7 L372.9 617.7" stroke="#fac4b7" stroke-width="3.1" stroke-linecap="round" opacity="0.41"/><path d="M481.7 346.3 L549.6 297.0" stroke="#fac4b7" stroke-width="5.7" stroke-linecap="round" opacity="0.60"/><path d="M661.3 416.0 L716.8 375.7" stroke="#f8bcae" stroke-width="4.2" stroke-linecap="round" opacity="0.75"/><path d="M428.8 157.7 L506.3 101.3" stroke="#fac4b7" stroke-width="4.6" stroke-linecap="round" opacity="0.67"/><path d="M524.8 352.0 L586.2 307.4" stroke="#fac4b7" stroke-width="5.4" stroke-linecap="round" opacity="0.75"/><path d="M342.4 516.0 L392.4 479.7" stroke="#fac4b7" stroke-width="2.4" stroke-linecap="round" opacity="0.51"/><path d="M398.0 529.8 L459.5 485.1" stroke="#f8bcae" stroke-width="3.0" stroke-linecap="round" opacity="0.76"/><path d="M394.9 276.5 L432.9 248.8" stroke="#f8bcae" stroke-width="5.6" stroke-linecap="round" opacity="0.65"/><path d="M748.1 623.0 L801.9 583.9" stroke="#f8bcae" stroke-width="3.9" stroke-linecap="round" opacity="0.48"/><path d="M573.8 503.3 L630.4 462.1" stroke="#fed8ce" stroke-width="2.6" stroke-linecap="round" opacity="0.56"/><path d="M348.2 404.9 L404.2 364.3" stroke="#fac4b7" stroke-width="3.8" stroke-linecap="round" opacity="0.76"/><path d="M317.9 557.7 L356.3 529.8" stroke="#fed8ce" stroke-width="2.8" stroke-linecap="round" opacity="0.73"/><path d="M438.6 234.8 L475.2 208.2" stroke="#fac4b7" stroke-width="2.7" stroke-linecap="round" opacity="0.71"/><path d="M448.4 644.5 L519.1 593.1" stroke="#fed8ce" stroke-width="3.2" stroke-linecap="round" opacity="0.84"/><path d="M324.1 336.2 L359.5 310.4" stroke="#fed8ce" stroke-width="5.6" stroke-linecap="round" opacity="0.53"/><path d="M393.9 218.4 L449.6 178.0" stroke="#fac4b7" stroke-width="3.1" stroke-linecap="round" opacity="0.76"/><path d="M732.3 229.1 L781.8 193.2" stroke="#fed8ce" stroke-width="5.3" stroke-linecap="round" opacity="0.78"/><path d="M568.6 432.8 L640.4 380.6" stroke="#fed8ce" stroke-width="4.1" stroke-linecap="round" opacity="0.72"/><path d="M558.7 482.0 L602.8 450.0" stroke="#fac4b7" stroke-width="3.7" stroke-linecap="round" opacity="0.69"/><path d="M535.8 400.1 L604.5 350.2" stroke="#f8bcae" stroke-width="3.4" stroke-linecap="round" opacity="0.82"/><path d="M517.8 444.3 L564.6 410.3" stroke="#fed8ce" stroke-width="2.9" stroke-linecap="round" opacity="0.45"/><path d="M730.8 491.7 L759.8 470.7" stroke="#f8bcae" stroke-width="5.6" stroke-linecap="round" opacity="0.82"/><path d="M740.9 251.6 L789.0 216.6" stroke="#f8bcae" stroke-width="3.4" stroke-linecap="round" opacity="0.43"/><path d="M596.5 185.3 L622.7 166.3" stroke="#fed8ce" stroke-width="4.3" stroke-linecap="round" opacity="0.84"/><path d="M747.6 628.3 L806.9 585.1" stroke="#fed8ce" stroke-width="3.7" stroke-linecap="round" opacity="0.48"/><path d="M528.1 334.2 L584.7 293.1" stroke="#fed8ce" stroke-width="2.8" stroke-linecap="round" opacity="0.45"/><path d="M338.4 250.3 L407.5 200.1" stroke="#fed8ce" stroke-width="2.1" stroke-linecap="round" opacity="0.44"/><path d="M710.7 283.2 L749.2 255.2" stroke="#f8bcae" stroke-width="3.1" stroke-linecap="round" opacity="0.84"/><path d="M735.5 631.2 L815.3 573.2" stroke="#f8bcae" stroke-width="5.7" stroke-linecap="round" opacity="0.67"/><path d="M659.8 668.2 L721.0 623.7" stroke="#fac4b7" stroke-width="5.6" stroke-linecap="round" opacity="0.82"/><path d="M312.3 420.0 L398.7 357.3" stroke="#f8bcae" stroke-width="2.1" stroke-linecap="round" opacity="0.53"/><path d="M417.4 663.4 L468.5 626.3" stroke="#f8bcae" stroke-width="2.6" stroke-linecap="round" opacity="0.71"/><path d="M524.7 451.6 L598.0 398.4" stroke="#f8bcae" stroke-width="5.2" stroke-linecap="round" opacity="0.57"/><path d="M739.5 262.4 L789.4 226.2" stroke="#fac4b7" stroke-width="2.9" stroke-linecap="round" opacity="0.55"/><path d="M439.9 157.8 L514.0 103.9" stroke="#fed8ce" stroke-width="3.0" stroke-linecap="round" opacity="0.57"/><path d="M624.2 421.0 L671.3 386.8" stroke="#fac4b7" stroke-width="4.6" stroke-linecap="round" opacity="0.48"/><path d="M343.5 281.8 L398.8 241.6" stroke="#fac4b7" stroke-width="5.1" stroke-linecap="round" opacity="0.48"/><path d="M602.3 467.3 L665.1 421.7" stroke="#fed8ce" stroke-width="4.3" stroke-linecap="round" opacity="0.79"/><path d="M360.4 270.8 L404.2 238.9" stroke="#fed8ce" stroke-width="3.3" stroke-linecap="round" opacity="0.49"/><path d="M286.9 278.9 L317.1 256.9" stroke="#fed8ce" stroke-width="4.7" stroke-linecap="round" opacity="0.51"/><path d="M376.7 365.5 L465.1 301.3" stroke="#fac4b7" stroke-width="3.5" stroke-linecap="round" opacity="0.43"/><path d="M305.8 584.4 L394.8 519.7" stroke="#fed8ce" stroke-width="3.7" stroke-linecap="round" opacity="0.75"/><path d="M435.7 561.0 L484.5 525.5" stroke="#fed8ce" stroke-width="3.1" stroke-linecap="round" opacity="0.82"/><path d="M303.4 656.7 L386.7 596.2" stroke="#f8bcae" stroke-width="2.2" stroke-linecap="round" opacity="0.57"/><path d="M301.9 625.6 L335.5 601.2" stroke="#fac4b7" stroke-width="2.8" stroke-linecap="round" opacity="0.83"/><path d="M726.4 327.8 L810.9 266.4" stroke="#fed8ce" stroke-width="2.6" stroke-linecap="round" opacity="0.54"/><path d="M291.0 273.4 L360.6 222.8" stroke="#fed8ce" stroke-width="2.9" stroke-linecap="round" opacity="0.80"/><path d="M597.5 341.0 L668.8 289.2" stroke="#f8bcae" stroke-width="5.7" stroke-linecap="round" opacity="0.82"/><path d="M305.1 246.1 L351.9 212.1" stroke="#fac4b7" stroke-width="2.2" stroke-linecap="round" opacity="0.54"/><path d="M555.4 292.4 L613.5 250.2" stroke="#fac4b7" stroke-width="5.3" stroke-linecap="round" opacity="0.74"/><path d="M528.1 642.5 L557.6 621.0" stroke="#f8bcae" stroke-width="2.9" stroke-linecap="round" opacity="0.81"/><path d="M748.0 635.7 L816.1 586.3" stroke="#fac4b7" stroke-width="2.7" stroke-linecap="round" opacity="0.69"/><path d="M321.4 401.5 L403.4 341.9" stroke="#fac4b7" stroke-width="4.4" stroke-linecap="round" opacity="0.67"/><path d="M684.5 391.8 L721.2 365.2" stroke="#fed8ce" stroke-width="5.8" stroke-linecap="round" opacity="0.41"/><path d="M643.7 358.3 L671.4 338.2" stroke="#f8bcae" stroke-width="2.7" stroke-linecap="round" opacity="0.58"/><path d="M673.1 649.8 L698.9 631.0" stroke="#fac4b7" stroke-width="3.7" stroke-linecap="round" opacity="0.68"/><path d="M300.9 162.8 L347.3 129.1" stroke="#f8bcae" stroke-width="2.7" stroke-linecap="round" opacity="0.55"/><path d="M685.5 442.2 L754.3 392.2" stroke="#fed8ce" stroke-width="3.0" stroke-linecap="round" opacity="0.54"/><path d="M444.7 609.6 L506.6 564.7" stroke="#fed8ce" stroke-width="3.7" stroke-linecap="round" opacity="0.66"/><path d="M395.6 643.7 L451.7 602.9" stroke="#fed8ce" stroke-width="4.7" stroke-linecap="round" opacity="0.78"/><path d="M702.2 234.6 L759.4 193.0" stroke="#fac4b7" stroke-width="5.9" stroke-linecap="round" opacity="0.74"/><path d="M727.6 313.0 L787.8 269.3" stroke="#fed8ce" stroke-width="3.6" stroke-linecap="round" opacity="0.83"/><path d="M409.2 200.4 L477.9 150.5" stroke="#fed8ce" stroke-width="3.4" stroke-linecap="round" opacity="0.45"/><path d="M635.2 566.3 L701.5 518.0" stroke="#fed8ce" stroke-width="4.7" stroke-linecap="round" opacity="0.62"/><path d="M401.8 448.6 L467.0 401.2" stroke="#f8bcae" stroke-width="3.8" stroke-linecap="round" opacity="0.54"/><path d="M583.2 182.1 L616.7 157.7" stroke="#fed8ce" stroke-width="2.1" stroke-linecap="round" opacity="0.60"/><path d="M311.5 566.0 L350.9 537.3" stroke="#f8bcae" stroke-width="5.3" stroke-linecap="round" opacity="0.51"/><path d="M712.4 412.1 L764.2 374.4" stroke="#f8bcae" stroke-width="4.2" stroke-linecap="round" opacity="0.62"/><path d="M506.3 301.1 L585.0 243.9" stroke="#fac4b7" stroke-width="4.0" stroke-linecap="round" opacity="0.82"/><path d="M586.8 508.6 L640.0 470.0" stroke="#fed8ce" stroke-width="3.2" stroke-linecap="round" opacity="0.81"/><path d="M605.7 564.7 L676.0 513.6" stroke="#f8bcae" stroke-width="5.2" stroke-linecap="round" opacity="0.45"/><path d="M503.1 521.5 L530.2 501.8" stroke="#fed8ce" stroke-width="5.2" stroke-linecap="round" opacity="0.70"/><path d="M500.7 484.9 L568.7 435.5" stroke="#fed8ce" stroke-width="3.6" stroke-linecap="round" opacity="0.79"/><path d="M748.4 233.1 L789.5 203.2" stroke="#fac4b7" stroke-width="3.2" stroke-linecap="round" opacity="0.54"/><path d="M361.1 511.0 L434.4 457.7" stroke="#fed8ce" stroke-width="5.9" stroke-linecap="round" opacity="0.69"/><path d="M637.1 497.9 L689.6 459.8" stroke="#fac4b7" stroke-width="3.6" stroke-linecap="round" opacity="0.75"/><path d="M698.1 446.0 L783.4 384.0" stroke="#fac4b7" stroke-width="4.6" stroke-linecap="round" opacity="0.50"/><path d="M618.4 170.3 L699.9 111.1" stroke="#f8bcae" stroke-width="4.0" stroke-linecap="round" opacity="0.50"/><path d="M573.0 211.2 L607.2 186.4" stroke="#fac4b7" stroke-width="3.7" stroke-linecap="round" opacity="0.52"/><path d="M361.8 486.9 L430.5 437.0" stroke="#fac4b7" stroke-width="5.8" stroke-linecap="round" opacity="0.55"/></g><g filter="url(#b1)"><path d="M513.6 592.1 L494.2 555.7" stroke="#ffffff" stroke-width="3.0" stroke-linecap="round" opacity="0.99"/><path d="M693.5 616.7 L678.9 589.1" stroke="#ffffff" stroke-width="2.8" stroke-linecap="round" opacity="0.63"/><path d="M524.2 646.4 L513.8 627.0" stroke="#ffffff" stroke-width="3.4" stroke-linecap="round" opacity="0.72"/><path d="M733.2 619.1 L715.7 586.2" stroke="#ffffff" stroke-width="2.5" stroke-linecap="round" opacity="0.62"/><path d="M588.8 632.2 L561.6 581.0" stroke="#ffffff" stroke-width="3.1" stroke-linecap="round" opacity="0.69"/><path d="M730.0 653.2 L703.4 603.1" stroke="#ffffff" stroke-width="1.7" stroke-linecap="round" opacity="0.77"/><path d="M671.4 651.0 L651.6 613.7" stroke="#ffffff" stroke-width="3.1" stroke-linecap="round" opacity="0.83"/><path d="M604.9 591.0 L593.9 570.2" stroke="#ffffff" stroke-width="2.0" stroke-linecap="round" opacity="0.85"/><path d="M545.9 667.5 L521.7 622.1" stroke="#ffffff" stroke-width="3.0" stroke-linecap="round" opacity="0.71"/><path d="M699.3 593.3 L688.8 573.6" stroke="#ffffff" stroke-width="1.7" stroke-linecap="round" opacity="0.98"/><path d="M548.5 610.2 L522.1 560.6" stroke="#ffffff" stroke-width="2.9" stroke-linecap="round" opacity="0.71"/><path d="M673.6 625.0 L661.8 602.8" stroke="#ffffff" stroke-width="2.6" stroke-linecap="round" opacity="0.76"/><path d="M662.4 644.5 L641.5 605.1" stroke="#ffffff" stroke-width="1.6" stroke-linecap="round" opacity="0.70"/><path d="M642.6 622.2 L626.0 591.0" stroke="#ffffff" stroke-width="3.4" stroke-linecap="round" opacity="0.85"/><path d="M552.0 609.6 L528.7 565.8" stroke="#ffffff" stroke-width="4.0" stroke-linecap="round" opacity="0.97"/><path d="M659.5 616.9 L649.7 598.4" stroke="#ffffff" stroke-width="3.6" stroke-linecap="round" opacity="0.90"/><path d="M717.4 605.3 L707.4 586.5" stroke="#ffffff" stroke-width="1.7" stroke-linecap="round" opacity="0.78"/><path d="M591.4 624.9 L573.6 591.3" stroke="#ffffff" stroke-width="2.3" stroke-linecap="round" opacity="0.76"/><path d="M575.9 651.8 L558.0 618.1" stroke="#ffffff" stroke-width="2.7" stroke-linecap="round" opacity="0.86"/><path d="M669.5 630.4 L645.0 584.4" stroke="#ffffff" stroke-width="3.8" stroke-linecap="round" opacity="0.90"/><path d="M574.1 647.9 L546.8 596.7" stroke="#ffffff" stroke-width="3.1" stroke-linecap="round" opacity="0.77"/><path d="M663.4 608.1 L639.5 563.2" stroke="#ffffff" stroke-width="2.8" stroke-linecap="round" opacity="0.83"/><path d="M597.8 657.2 L582.0 627.4" stroke="#ffffff" stroke-width="2.6" stroke-linecap="round" opacity="0.85"/><path d="M555.2 621.9 L527.2 569.1" stroke="#ffffff" stroke-width="2.0" stroke-linecap="round" opacity="0.62"/><path d="M645.7 655.7 L620.6 608.5" stroke="#ffffff" stroke-width="2.5" stroke-linecap="round" opacity="0.90"/><path d="M644.7 610.1 L622.1 567.6" stroke="#ffffff" stroke-width="2.9" stroke-linecap="round" opacity="0.99"/><path d="M534.1 652.5 L518.6 623.3" stroke="#ffffff" stroke-width="3.3" stroke-linecap="round" opacity="0.71"/><path d="M641.8 632.3 L623.1 597.1" stroke="#ffffff" stroke-width="1.9" stroke-linecap="round" opacity="0.87"/><path d="M572.3 654.5 L555.0 622.0" stroke="#ffffff" stroke-width="1.9" stroke-linecap="round" opacity="0.78"/><path d="M632.5 669.3 L612.4 631.5" stroke="#ffffff" stroke-width="3.9" stroke-linecap="round" opacity="0.77"/></g><g filter="url(#b1)"><path d="M605.2 301.1 L590.4 245.7" stroke="#ffffff" stroke-width="1.9" stroke-linecap="round" opacity="0.93"/><path d="M638.0 332.8 L625.6 286.5" stroke="#ffffff" stroke-width="2.8" stroke-linecap="round" opacity="0.82"/><path d="M639.8 348.6 L621.8 281.5" stroke="#ffffff" stroke-width="3.1" stroke-linecap="round" opacity="0.68"/><path d="M602.5 409.3 L586.5 349.5" stroke="#ffffff" stroke-width="1.6" stroke-linecap="round" opacity="0.71"/><path d="M648.9 383.4 L640.8 353.1" stroke="#ffffff" stroke-width="3.5" stroke-linecap="round" opacity="0.68"/><path d="M670.3 383.9 L658.2 338.7" stroke="#ffffff" stroke-width="3.7" stroke-linecap="round" opacity="0.94"/><path d="M670.1 303.3 L650.5 230.0" stroke="#ffffff" stroke-width="3.5" stroke-linecap="round" opacity="0.84"/><path d="M698.7 326.8 L688.1 287.1" stroke="#ffffff" stroke-width="3.0" stroke-linecap="round" opacity="0.86"/><path d="M692.2 394.6 L672.9 322.8" stroke="#ffffff" stroke-width="1.9" stroke-linecap="round" opacity="0.97"/><path d="M667.7 320.6 L655.3 274.4" stroke="#ffffff" stroke-width="3.3" stroke-linecap="round" opacity="0.91"/><path d="M631.9 402.5 L617.9 350.4" stroke="#ffffff" stroke-width="1.6" stroke-linecap="round" opacity="0.89"/><path d="M604.7 383.5 L596.1 351.5" stroke="#ffffff" stroke-width="3.6" stroke-linecap="round" opacity="0.64"/><path d="M604.4 342.4 L583.9 265.8" stroke="#ffffff" stroke-width="3.0" stroke-linecap="round" opacity="0.63"/><path d="M610.2 302.5 L593.4 239.9" stroke="#ffffff" stroke-width="1.9" stroke-linecap="round" opacity="0.62"/><path d="M615.3 381.4 L606.8 349.9" stroke="#ffffff" stroke-width="3.4" stroke-linecap="round" opacity="0.82"/><path d="M635.6 343.2 L624.6 302.2" stroke="#ffffff" stroke-width="2.2" stroke-linecap="round" opacity="0.61"/></g><g filter="url(#b1)"><path d="M636.4 429.2 L630.0 392.8" stroke="#ffffff" stroke-width="1.9" stroke-linecap="round" opacity="0.94"/><path d="M646.9 435.8 L639.5 394.0" stroke="#ffffff" stroke-width="3.7" stroke-linecap="round" opacity="0.88"/><path d="M650.0 428.9 L642.1 384.0" stroke="#ffffff" stroke-width="2.8" stroke-linecap="round" opacity="0.78"/><path d="M657.5 469.8 L646.7 408.6" stroke="#ffffff" stroke-width="3.6" stroke-linecap="round" opacity="0.61"/><path d="M630.1 402.2 L619.4 341.3" stroke="#ffffff" stroke-width="3.1" stroke-linecap="round" opacity="0.81"/><path d="M636.7 464.6 L627.7 413.1" stroke="#ffffff" stroke-width="2.7" stroke-linecap="round" opacity="0.90"/><path d="M645.5 427.8 L636.4 376.5" stroke="#ffffff" stroke-width="3.7" stroke-linecap="round" opacity="0.63"/><path d="M624.7 468.0 L615.7 417.0" stroke="#ffffff" stroke-width="2.8" stroke-linecap="round" opacity="0.62"/><path d="M628.9 425.0 L617.1 357.8" stroke="#ffffff" stroke-width="2.8" stroke-linecap="round" opacity="0.61"/><path d="M614.8 427.3 L605.2 372.5" stroke="#ffffff" stroke-width="1.8" stroke-linecap="round" opacity="0.84"/><path d="M654.7 403.9 L644.5 346.4" stroke="#ffffff" stroke-width="1.7" stroke-linecap="round" opacity="0.87"/><path d="M621.7 431.3 L612.7 380.3" stroke="#ffffff" stroke-width="2.3" stroke-linecap="round" opacity="0.60"/><path d="M672.2 464.7 L662.7 411.4" stroke="#ffffff" stroke-width="2.1" stroke-linecap="round" opacity="0.73"/><path d="M695.8 439.1 L689.9 405.6" stroke="#ffffff" stroke-width="3.1" stroke-linecap="round" opacity="0.68"/></g><g filter="url(#b1)"><path d="M735.8 504.6 L729.2 466.9" stroke="#ffffff" stroke-width="2.4" stroke-linecap="round" opacity="0.92"/><path d="M728.5 561.4 L715.6 488.2" stroke="#ffffff" stroke-width="3.1" stroke-linecap="round" opacity="0.92"/><path d="M740.6 561.6 L732.6 516.3" stroke="#ffffff" stroke-width="1.8" stroke-linecap="round" opacity="0.97"/><path d="M702.0 541.9 L693.4 493.6" stroke="#ffffff" stroke-width="3.6" stroke-linecap="round" opacity="0.76"/><path d="M729.2 525.7 L718.3 463.9" stroke="#ffffff" stroke-width="1.6" stroke-linecap="round" opacity="0.71"/><path d="M709.0 489.1 L701.6 447.2" stroke="#ffffff" stroke-width="3.2" stroke-linecap="round" opacity="0.72"/><path d="M738.0 557.1 L724.3 479.3" stroke="#ffffff" stroke-width="3.2" stroke-linecap="round" opacity="0.97"/><path d="M714.4 480.8 L705.6 431.0" stroke="#ffffff" stroke-width="3.0" stroke-linecap="round" opacity="0.81"/><path d="M702.2 483.1 L688.5 405.1" stroke="#ffffff" stroke-width="2.4" stroke-linecap="round" opacity="0.76"/><path d="M742.4 550.8 L731.9 491.3" stroke="#ffffff" stroke-width="2.0" stroke-linecap="round" opacity="0.80"/><path d="M734.5 542.2 L727.2 500.9" stroke="#ffffff" stroke-width="2.0" stroke-linecap="round" opacity="0.63"/><path d="M738.9 483.7 L732.1 444.8" stroke="#ffffff" stroke-width="2.7" stroke-linecap="round" opacity="0.85"/></g><g filter="url(#b1)"><path d="M567.0 246.1 L557.0 189.5" stroke="#ffffff" stroke-width="1.6" stroke-linecap="round" opacity="0.56"/><path d="M491.1 173.8 L486.5 147.9" stroke="#ffffff" stroke-width="3.7" stroke-linecap="round" opacity="0.56"/><path d="M562.7 183.9 L555.7 144.1" stroke="#ffffff" stroke-width="4.0" stroke-linecap="round" opacity="0.74"/><path d="M499.9 188.0 L492.0 143.4" stroke="#ffffff" stroke-width="2.6" stroke-linecap="round" opacity="0.76"/><path d="M491.9 186.9 L483.3 138.5" stroke="#ffffff" stroke-width="2.4" stroke-linecap="round" opacity="0.65"/><path d="M567.1 179.6 L562.7 154.8" stroke="#ffffff" stroke-width="2.3" stroke-linecap="round" opacity="0.58"/><path d="M513.6 170.9 L502.4 107.0" stroke="#ffffff" stroke-width="3.0" stroke-linecap="round" opacity="0.62"/><path d="M507.2 236.5 L501.6 204.7" stroke="#ffffff" stroke-width="3.5" stroke-linecap="round" opacity="0.87"/><path d="M484.0 235.3 L477.6 199.0" stroke="#ffffff" stroke-width="2.2" stroke-linecap="round" opacity="0.80"/><path d="M572.0 239.9 L560.4 174.3" stroke="#ffffff" stroke-width="2.0" stroke-linecap="round" opacity="0.85"/><path d="M514.4 195.2 L505.7 145.8" stroke="#ffffff" stroke-width="1.8" stroke-linecap="round" opacity="0.85"/><path d="M517.1 230.5 L505.2 163.4" stroke="#ffffff" stroke-width="3.7" stroke-linecap="round" opacity="0.90"/><path d="M579.1 235.6 L567.3 168.4" stroke="#ffffff" stroke-width="1.9" stroke-linecap="round" opacity="0.70"/><path d="M481.7 247.7 L472.2 194.0" stroke="#ffffff" stroke-width="2.6" stroke-linecap="round" opacity="0.58"/></g><g filter="url(#b1)"><path d="M432.8 371.1 L422.3 342.3" stroke="#ffffff" stroke-width="3.2" stroke-linecap="round" opacity="0.61"/><path d="M338.5 395.5 L329.1 369.6" stroke="#ffffff" stroke-width="3.6" stroke-linecap="round" opacity="0.65"/><path d="M377.2 398.7 L368.8 375.6" stroke="#ffffff" stroke-width="3.2" stroke-linecap="round" opacity="0.76"/><path d="M355.1 380.6 L347.8 360.8" stroke="#ffffff" stroke-width="2.6" stroke-linecap="round" opacity="0.82"/><path d="M308.5 377.0 L295.1 340.4" stroke="#ffffff" stroke-width="3.2" stroke-linecap="round" opacity="0.63"/><path d="M343.6 365.0 L326.6 318.3" stroke="#ffffff" stroke-width="2.7" stroke-linecap="round" opacity="0.87"/><path d="M384.9 416.7 L376.3 393.2" stroke="#ffffff" stroke-width="3.0" stroke-linecap="round" opacity="0.67"/><path d="M415.1 383.6 L405.6 357.5" stroke="#ffffff" stroke-width="3.2" stroke-linecap="round" opacity="0.89"/><path d="M289.3 347.9 L282.0 327.7" stroke="#ffffff" stroke-width="2.6" stroke-linecap="round" opacity="0.77"/><path d="M367.7 408.5 L355.7 375.7" stroke="#ffffff" stroke-width="1.8" stroke-linecap="round" opacity="0.69"/></g><g filter="url(#b1)"><path d="M326.1 632.8 L316.7 579.5" stroke="#ffffff" stroke-width="1.9" stroke-linecap="round" opacity="0.64"/><path d="M356.2 654.2 L350.3 620.9" stroke="#ffffff" stroke-width="1.8" stroke-linecap="round" opacity="0.87"/><path d="M353.2 632.4 L343.8 578.7" stroke="#ffffff" stroke-width="3.2" stroke-linecap="round" opacity="0.69"/><path d="M366.5 637.0 L359.7 598.8" stroke="#ffffff" stroke-width="1.5" stroke-linecap="round" opacity="0.86"/><path d="M348.9 661.9 L344.4 636.0" stroke="#ffffff" stroke-width="2.2" stroke-linecap="round" opacity="0.71"/><path d="M341.9 588.7 L331.8 531.2" stroke="#ffffff" stroke-width="3.3" stroke-linecap="round" opacity="0.74"/><path d="M350.3 652.4 L344.1 617.1" stroke="#ffffff" stroke-width="3.8" stroke-linecap="round" opacity="0.88"/><path d="M360.9 656.9 L356.9 634.1" stroke="#ffffff" stroke-width="1.8" stroke-linecap="round" opacity="0.76"/><path d="M377.7 665.8 L371.2 628.6" stroke="#ffffff" stroke-width="2.9" stroke-linecap="round" opacity="0.78"/><path d="M365.8 620.0 L360.3 588.7" stroke="#ffffff" stroke-width="2.4" stroke-linecap="round" opacity="0.82"/></g><g filter="url(#b1)"><path d="M541.9 625.1 L523.3 571.4 L547.3 622.9 Z" fill="#fff" opacity="0.76"/><path d="M692.4 609.5 L676.3 561.4 L698.0 607.2 Z" fill="#fff" opacity="0.77"/><path d="M504.2 623.0 L485.4 572.0 L507.3 621.7 Z" fill="#fff" opacity="0.94"/><path d="M556.6 614.6 L550.6 587.8 L564.9 611.3 Z" fill="#fff" opacity="0.92"/><path d="M712.7 603.0 L705.0 577.4 L717.3 601.2 Z" fill="#fff" opacity="0.85"/><path d="M531.0 631.4 L516.5 590.4 L534.6 630.0 Z" fill="#fff" opacity="0.95"/><path d="M532.0 631.1 L517.1 585.8 L537.9 628.8 Z" fill="#fff" opacity="0.80"/><path d="M617.5 606.3 L611.3 579.9 L625.1 603.2 Z" fill="#fff" opacity="0.77"/><path d="M688.4 598.3 L664.8 528.6 L696.1 595.1 Z" fill="#fff" opacity="0.93"/><path d="M686.3 605.3 L665.0 547.6 L689.8 603.9 Z" fill="#fff" opacity="0.84"/><path d="M699.6 596.8 L676.8 529.2 L707.3 593.6 Z" fill="#fff" opacity="0.82"/><path d="M588.5 615.2 L576.1 572.4 L596.8 611.8 Z" fill="#fff" opacity="0.82"/><path d="M507.3 617.8 L488.6 559.6 L515.6 614.4 Z" fill="#fff" opacity="0.85"/><path d="M621.0 612.7 L599.6 554.0 L625.0 611.0 Z" fill="#fff" opacity="0.88"/><path d="M636.7 612.2 L625.8 579.9 L640.4 610.7 Z" fill="#fff" opacity="0.80"/><path d="M725.3 596.1 L706.9 544.4 L729.7 594.3 Z" fill="#fff" opacity="0.73"/><path d="M518.3 630.4 L496.8 570.2 L523.2 628.4 Z" fill="#fff" opacity="0.91"/><path d="M664.7 614.5 L639.9 545.9 L669.7 612.5 Z" fill="#fff" opacity="1.00"/><path d="M733.0 600.2 L709.8 535.0 L738.5 598.0 Z" fill="#fff" opacity="0.81"/><path d="M562.7 626.0 L551.9 594.7 L565.9 624.8 Z" fill="#fff" opacity="0.94"/><path d="M689.2 603.0 L665.7 540.4 L692.3 601.8 Z" fill="#fff" opacity="0.78"/><path d="M573.0 615.7 L562.0 584.0 L576.2 614.4 Z" fill="#fff" opacity="0.80"/><path d="M718.1 609.9 L697.5 551.0 L723.5 607.7 Z" fill="#fff" opacity="0.78"/><path d="M733.7 598.5 L712.1 540.9 L736.6 597.3 Z" fill="#fff" opacity="0.76"/><path d="M703.1 608.0 L680.3 542.7 L709.2 605.5 Z" fill="#fff" opacity="0.83"/><path d="M641.6 616.4 L629.3 577.8 L647.4 614.1 Z" fill="#fff" opacity="0.78"/><path d="M685.3 594.7 L667.2 538.1 L693.4 591.4 Z" fill="#fff" opacity="0.71"/><path d="M644.5 612.0 L622.2 548.1 L650.5 609.6 Z" fill="#fff" opacity="0.78"/><path d="M600.6 623.2 L576.0 557.3 L604.1 621.8 Z" fill="#fff" opacity="0.73"/><path d="M525.8 613.5 L509.8 568.9 L529.3 612.1 Z" fill="#fff" opacity="0.96"/><path d="M660.0 599.6 L642.8 550.5 L664.6 597.7 Z" fill="#fff" opacity="0.85"/><path d="M555.3 613.0 L544.9 580.3 L560.1 611.0 Z" fill="#fff" opacity="0.91"/><path d="M633.2 601.6 L614.3 543.9 L640.8 598.5 Z" fill="#fff" opacity="0.93"/><path d="M693.2 593.0 L676.7 547.7 L696.3 591.8 Z" fill="#fff" opacity="0.93"/><path d="M543.7 625.5 L533.0 589.3 L550.4 622.8 Z" fill="#fff" opacity="0.79"/><path d="M511.2 623.1 L499.9 584.0 L519.0 620.0 Z" fill="#fff" opacity="0.79"/><path d="M624.1 612.2 L598.6 544.4 L627.4 610.8 Z" fill="#fff" opacity="0.88"/><path d="M624.7 616.0 L599.5 547.0 L629.2 614.1 Z" fill="#fff" opacity="0.91"/><path d="M627.5 612.5 L620.6 584.9 L634.8 609.6 Z" fill="#fff" opacity="0.99"/><path d="M588.6 611.8 L562.3 541.9 L591.9 610.4 Z" fill="#fff" opacity="0.72"/><path d="M520.0 630.2 L499.0 570.8 L525.2 628.1 Z" fill="#fff" opacity="0.89"/><path d="M506.9 628.5 L492.1 583.6 L512.6 626.2 Z" fill="#fff" opacity="0.82"/><path d="M598.8 609.0 L591.1 582.5 L604.0 606.9 Z" fill="#fff" opacity="0.77"/><path d="M671.3 612.1 L651.1 554.3 L676.7 610.0 Z" fill="#fff" opacity="0.77"/><path d="M593.4 615.3 L576.3 561.2 L601.6 612.0 Z" fill="#fff" opacity="0.73"/><path d="M355.6 660.4 L350.3 611.9 L362.0 659.3 Z" fill="#fff" opacity="0.93"/><path d="M364.4 665.7 L359.5 619.2 L370.8 664.6 Z" fill="#fff" opacity="0.91"/><path d="M368.7 655.3 L361.1 599.1 L373.2 654.5 Z" fill="#fff" opacity="0.88"/><path d="M378.0 669.5 L369.1 610.6 L381.0 669.0 Z" fill="#fff" opacity="0.79"/><path d="M346.1 658.3 L344.2 632.4 L351.3 657.4 Z" fill="#fff" opacity="0.72"/><path d="M345.8 669.3 L339.5 619.9 L350.5 668.4 Z" fill="#fff" opacity="0.73"/><path d="M385.2 664.5 L382.5 636.3 L389.5 663.7 Z" fill="#fff" opacity="0.89"/><path d="M368.8 655.6 L360.8 598.0 L373.0 654.8 Z" fill="#fff" opacity="0.78"/><path d="M378.9 653.4 L372.5 606.5 L382.6 652.7 Z" fill="#fff" opacity="0.88"/><path d="M344.2 658.0 L336.6 600.8 L349.0 657.2 Z" fill="#fff" opacity="0.83"/><path d="M364.8 656.0 L362.3 629.0 L369.3 655.2 Z" fill="#fff" opacity="0.78"/><path d="M338.2 669.8 L337.6 648.2 L344.4 668.7 Z" fill="#fff" opacity="0.98"/><path d="M370.7 650.7 L365.3 610.9 L373.8 650.1 Z" fill="#fff" opacity="0.88"/><path d="M369.5 655.3 L368.5 634.8 L374.6 654.4 Z" fill="#fff" opacity="0.73"/><path d="M346.3 659.5 L338.9 604.2 L350.7 658.7 Z" fill="#fff" opacity="0.74"/><path d="M375.9 666.7 L370.4 625.9 L379.1 666.2 Z" fill="#fff" opacity="0.76"/><path d="M351.1 661.6 L349.1 632.5 L357.2 660.5 Z" fill="#fff" opacity="0.95"/><path d="M382.9 668.1 L381.9 647.3 L388.1 667.2 Z" fill="#fff" opacity="0.72"/><path d="M604.1 257.3 L608.9 290.5 L607.8 257.0 Z" fill="#fff" opacity="0.72"/><path d="M591.7 258.1 L597.5 296.0 L596.6 257.7 Z" fill="#fff" opacity="0.94"/><path d="M525.2 271.4 L531.5 318.7 L529.4 271.0 Z" fill="#fff" opacity="0.89"/><path d="M602.1 244.3 L609.6 301.4 L607.1 243.8 Z" fill="#fff" opacity="0.90"/><path d="M505.0 277.6 L511.6 335.1 L508.1 277.3 Z" fill="#fff" opacity="0.85"/><path d="M573.6 264.6 L580.1 318.7 L577.0 264.3 Z" fill="#fff" opacity="0.98"/><path d="M552.5 265.8 L558.5 301.2 L558.3 265.3 Z" fill="#fff" opacity="0.86"/><path d="M489.4 293.4 L495.5 345.6 L492.5 293.1 Z" fill="#fff" opacity="0.81"/><path d="M551.6 270.5 L559.3 323.9 L557.5 269.9 Z" fill="#fff" opacity="0.85"/><path d="M499.4 290.5 L505.4 321.9 L506.0 289.9 Z" fill="#fff" opacity="0.90"/><path d="M507.9 286.7 L512.9 314.7 L513.0 286.2 Z" fill="#fff" opacity="0.97"/><path d="M612.5 247.3 L618.2 274.0 L619.2 246.8 Z" fill="#fff" opacity="0.94"/><path d="M478.9 286.8 L484.9 324.9 L484.3 286.3 Z" fill="#fff" opacity="0.93"/><path d="M568.0 256.3 L573.0 283.4 L573.1 255.8 Z" fill="#fff" opacity="0.96"/><path d="M505.9 291.5 L512.5 331.7 L512.0 291.0 Z" fill="#fff" opacity="0.92"/><path d="M601.3 250.4 L608.6 307.1 L605.9 250.0 Z" fill="#fff" opacity="0.75"/><path d="M553.8 273.8 L559.7 320.8 L557.3 273.5 Z" fill="#fff" opacity="0.71"/><path d="M536.4 274.1 L544.4 332.7 L542.0 273.6 Z" fill="#fff" opacity="0.76"/><path d="M491.7 294.3 L498.6 335.6 L498.3 293.8 Z" fill="#fff" opacity="0.85"/><path d="M494.4 279.9 L501.1 324.6 L500.0 279.4 Z" fill="#fff" opacity="0.93"/></g><ellipse cx="148" cy="397" rx="11" ry="25" fill="#fad2c8"/><path d="M218 67 L246 67 L238 150 L226 200 L212 195 Z" fill="#f9d6cd" opacity="0.85" filter="url(#b1)"/><path d="M256 67 L275 67 L270 120 L258 150 L252 120 Z" fill="#fbe3dd" opacity="0.8" filter="url(#b1)"/><path d="M185 67 L218 67 L206 180 L192 246 Q180 250 166 246 L172 170 Z" fill="#f2ae9e"/><path d="M170 113 Q212 84 259 74 Q216 92 176 120 Z" fill="#ff3a10" stroke="#ff3a10" stroke-width="1.5" stroke-linejoin="round"/><path d="M140 67 L185.5 67 L173 165 L162 222 Q160 238 150 240 L140 240 Z" fill="url(#rg)"/><path d="M154 67 L157 67 L154 105 L152 128 L151 128 L152 100 Z" fill="#fff"/><path d="M152 128 Q154 108 156 107 Q158 110 156 122 L154 126 Q159 117 166 116" stroke="#fff" stroke-width="1.4" fill="none" stroke-linejoin="round"/><path d="M212 113 Q238 92 282 84" stroke="#f2ae9e" stroke-width="4" fill="none" stroke-linecap="round" opacity="0.8"/><path d="M319 67 L351 67 L342 110 L327 154 Q315 178 296 180 Q284 180 285 172 L300 150 Z" fill="#f2ae9e"/><path d="M281.5 67 L319 67 L309 122 Q302 148 292 160 Q283 171 272 173 L258 173 Q249 170 249 158 Q251 146 260 146 Q268 146 272 150 Q276 140 279 110 Z M256 158 Q258 165 264 163 L268 152 Q260 150 256 158 Z" fill="url(#rg2)" fill-rule="evenodd"/><path d="M371.9 95.7 L373.6 95.8 L375.2 95.8 L376.9 95.9 L378.5 95.9 L380.1 96.0 L381.7 96.1 L383.4 96.2 L385.0 96.3 L386.6 96.4 L388.2 96.5 L389.8 96.7 L391.4 96.8 L392.9 97.0 L394.5 97.1 L396.1 97.3 L397.6 97.5 L399.2 97.7 L400.7 97.9 L402.3 98.1 L403.8 98.4 L405.4 98.6 L406.9 98.9 L408.4 99.1 L409.9 99.4 L410.1 98.6 L408.6 98.2 L407.1 97.9 L405.6 97.5 L404.1 97.1 L402.5 96.8 L401.0 96.5 L399.5 96.1 L397.9 95.8 L396.4 95.5 L394.8 95.2 L393.2 95.0 L391.6 94.7 L390.1 94.4 L388.5 94.2 L386.9 93.9 L385.2 93.7 L383.6 93.5 L382.0 93.3 L380.4 93.1 L378.7 92.9 L377.1 92.7 L375.4 92.6 L373.8 92.4 L372.1 92.3 Z" fill="#f4b4a5" /><path d="M315.8 86.7 L318.6 86.9 L321.4 87.1 L324.2 87.2 L326.9 87.4 L329.7 87.6 L332.4 87.8 L335.1 88.0 L337.8 88.2 L340.4 88.4 L343.1 88.6 L345.7 88.9 L348.3 89.1 L350.9 89.4 L353.4 89.6 L356.0 89.9 L358.5 90.1 L361.0 90.4 L363.5 90.7 L365.9 91.0 L368.4 91.3 L370.8 91.6 L373.2 91.9 L375.6 92.2 L377.9 92.5 L378.1 91.5 L375.8 91.0 L373.4 90.5 L371.0 90.0 L368.6 89.5 L366.2 89.0 L363.8 88.6 L361.3 88.1 L358.8 87.7 L356.3 87.2 L353.8 86.8 L351.3 86.3 L348.7 85.9 L346.1 85.5 L343.5 85.0 L340.9 84.6 L338.2 84.2 L335.6 83.8 L332.9 83.5 L330.1 83.1 L327.4 82.7 L324.6 82.3 L321.9 82.0 L319.1 81.6 L316.2 81.3 Z" fill="#ff3a10" /><path d="M293 69 L287 117" stroke="#fff" stroke-width="1.3"/><path d="M292 96 Q296 90 309 89" stroke="#fff" stroke-width="1" fill="none"/><circle cx="286" cy="128" r="1.5" fill="#fff"/><path d="M297.8 169.2 L305.4 170.0 L313.0 170.6 L320.3 171.2 L327.4 171.6 L334.4 171.9 L341.1 172.1 L347.7 172.2 L354.0 172.2 L360.1 172.1 L366.1 171.8 L371.8 171.5 L377.2 171.0 L382.5 170.4 L387.5 169.7 L392.3 168.8 L396.9 167.8 L401.2 166.7 L405.3 165.5 L409.1 164.1 L412.7 162.7 L416.0 161.0 L419.0 159.3 L421.8 157.4 L424.3 155.4 L423.7 154.6 L421.2 156.5 L418.4 158.2 L415.3 159.8 L412.1 161.2 L408.5 162.5 L404.7 163.7 L400.7 164.8 L396.4 165.7 L391.9 166.5 L387.2 167.2 L382.2 167.8 L377.0 168.3 L371.6 168.6 L365.9 168.8 L360.1 168.9 L354.0 168.9 L347.7 168.8 L341.2 168.5 L334.5 168.2 L327.7 167.7 L320.6 167.1 L313.3 166.4 L305.9 165.7 L298.2 164.8 Z" fill="#f4b4a5" /><path d="M287.6 160.7 L294.1 161.6 L300.4 162.3 L306.6 163.0 L312.7 163.6 L318.6 164.0 L324.3 164.4 L329.9 164.6 L335.3 164.7 L340.5 164.6 L345.6 164.5 L350.4 164.2 L355.0 163.7 L359.4 163.2 L363.6 162.4 L367.6 161.6 L371.3 160.5 L374.8 159.3 L378.0 158.0 L381.0 156.5 L383.6 154.8 L386.0 152.9 L388.1 150.9 L389.9 148.6 L391.4 146.3 L390.6 145.7 L389.0 147.9 L387.2 149.9 L385.1 151.7 L382.7 153.3 L380.0 154.8 L377.2 156.0 L374.0 157.2 L370.6 158.1 L367.0 158.9 L363.1 159.6 L359.0 160.1 L354.7 160.5 L350.2 160.7 L345.5 160.8 L340.5 160.8 L335.4 160.7 L330.1 160.4 L324.6 160.0 L319.0 159.5 L313.2 158.8 L307.2 158.1 L301.1 157.3 L294.8 156.3 L288.4 155.3 Z" fill="#e8300c" /><path d="M258 250 Q300 242 350 244 Q400 247 437 253" stroke="#f2ae9e" stroke-width="4" fill="none" stroke-linecap="round" opacity="0.85"/><path d="M303.90 301.62 C300.80 285.28 291.45 261.18 300.45 245.59 C308.55 231.56 322.89 231.52 329.60 235.40 C336.32 239.27 334.50 248.62 331.80 253.29 C334.50 248.62 341.68 242.37 348.40 246.25 C355.11 250.12 362.25 262.56 354.15 276.59 C345.15 292.18 319.60 296.13 303.90 301.62 Z" fill="none" stroke="#f7a8b8" stroke-width="16" opacity="0.75" filter="url(#glow)"/><path d="M303.90 301.62 C300.80 285.28 291.45 261.18 300.45 245.59 C308.55 231.56 322.89 231.52 329.60 235.40 C336.32 239.27 334.50 248.62 331.80 253.29 C334.50 248.62 341.68 242.37 348.40 246.25 C355.11 250.12 362.25 262.56 354.15 276.59 C345.15 292.18 319.60 296.13 303.90 301.62 Z" fill="#fffafa"  /><path d="M226.3 249.0 L231.0 247.4 L236.2 245.8 L241.7 244.4 L247.7 243.0 L254.1 241.7 L260.8 240.6 L267.8 239.6 L275.1 238.7 L282.7 238.0 L290.4 237.4 L298.4 236.9 L306.5 236.6 L314.8 236.4 L323.1 236.4 L331.6 236.5 L340.0 236.8 L348.5 237.3 L357.0 238.0 L365.4 238.9 L373.8 240.0 L382.0 241.3 L390.1 242.8 L398.1 244.5 L405.9 246.5 L406.1 245.5 L398.4 243.2 L390.5 241.1 L382.4 239.2 L374.2 237.5 L365.8 236.1 L357.4 234.8 L348.9 233.7 L340.3 232.9 L331.8 232.2 L323.3 231.6 L314.8 231.3 L306.5 231.1 L298.2 231.2 L290.1 231.4 L282.2 231.7 L274.5 232.2 L267.0 232.9 L259.8 233.7 L252.9 234.6 L246.3 235.6 L240.1 236.8 L234.2 238.1 L228.7 239.5 L223.7 241.0 Z" fill="#e02c0e" /><circle cx="226" cy="245" r="4.2" fill="#e02c0e"/><path d="M572 67 L610 67 Q607 92 598 108 Q588 126 566 132 Q548 136 538 131 Q536 125 546 117 Q558 106 562 90 Z" fill="#f3b6a7"/><path d="M560 131 Q600 136 633 137 Q645 134 648 124" stroke="#f2ae9e" stroke-width="5" fill="none" stroke-linecap="round"/><path d="M542.5 67 L574.5 67 L565 94 L557 113 Q552 122 540 125 Q525 128 515 126 Q506 122 507 114 Q509 105 520 105 Q527 106 530 108 L537 91 Z M514 117 Q517 124 525 120 L529 111 Q518 108 514 117 Z" fill="url(#rg2)" fill-rule="evenodd"/><path d="M553 115 Q572 118 590 125 Q602 130 612 125 Q622 115 624 98 L627 67" stroke="#de2e0e" stroke-width="4.5" fill="none"/><path d="M558 157 L650 157" stroke="#f2ae9e" stroke-width="5" stroke-linecap="round"/><path d="M676 67 L695 67 L694 112 Q692 123 686 123 Q679 122 678 112 Z" fill="#f2ae9e"/><path d="M727 67 L756 67 L755 120 Q752 130 742 130 Q730 130 729 118 Z" fill="#f2ae9e"/><path d="M644.5 67 L670.5 67 L669 98 Q666 114 657 115 Q648 114 647 98 Z" fill="url(#rg)"/><path d="M695 67 L724 67 L724 108 Q722 122 711 122 Q699 122 697 108 Z" fill="url(#rg)"/><path d="M756 67 L772 67 L772 130 L766 130 Q757 128 756 115 Z" fill="url(#rg)"/><path d="M764 67 L763 79" stroke="#fff" stroke-width="1.6"/><circle cx="766" cy="94" r="1.5" fill="#fff"/><path d="M630 135 Q648 130 652 113" stroke="#f2ae9e" stroke-width="4" fill="none" stroke-linecap="round"/><path d="M688 154 Q705 152 712 157 Q718 165 716 178 Q712 200 706 212 Q690 240 665 252 Q640 264 610 268 L590 268 Q620 255 640 240 Q665 215 675 185 Z" fill="#f2ae9e"/><path d="M530 148 Q531 145 540 145.6 L676 146.6 Q684 148 684 158 L682 187 Q678 205 669 219 Q658 236 644 245 Q625 257 598 262 Q575 266 545 263 Q575 262 588 256 Q603 250 616 240 Q628 229 635 219 Q645 204 648 187 L653 152 L540 152 Q530 152 530 148 Z" fill="url(#rg3)"/><path d="M560 155 L652 155" stroke="#f7b5a6" stroke-width="2.5"/><path d="M665 159 Q657 190 641 217" stroke="#fff" stroke-width="1.8" stroke-linecap="round" fill="none"/><path d="M651 206 Q655 199 663 200" stroke="#fff" stroke-width="1.1" fill="none"/><path d="M652 204 L650 210" stroke="#fff" stroke-width="1.1"/><circle cx="635" cy="230" r="1.7" fill="#fff"/><path d="M452 317 C445 304 430 295 415 297 C401 300 395 314 400 327 C405 343 425 358 443 365 C452 369 461 369 469 364 C482 356 490 347 495 336 C503 321 503 303 493 294 C483 286 467 288 460 298 C456 304 453 311 452 317 Z" fill="#ff3a12" filter="url(#b1)"/><path d="M545.98 325.97 C536.64 318.91 520.57 310.86 517.42 298.25 C514.59 286.90 521.48 279.82 526.58 278.55 C531.67 277.28 535.28 283.08 536.23 286.86 C535.28 283.08 535.75 276.26 540.84 274.99 C545.94 273.72 555.34 276.74 558.17 288.09 C561.32 300.70 550.91 315.36 545.98 325.97 Z" fill="none" stroke="#f58aa0" stroke-width="12" opacity="0.75" filter="url(#glow)"/><path d="M545.98 325.97 C536.64 318.91 520.57 310.86 517.42 298.25 C514.59 286.90 521.48 279.82 526.58 278.55 C531.67 277.28 535.28 283.08 536.23 286.86 C535.28 283.08 535.75 276.26 540.84 274.99 C545.94 273.72 555.34 276.74 558.17 288.09 C561.32 300.70 550.91 315.36 545.98 325.97 Z" fill="#ffffff"  /><path d="M758.13 422.48 C739.43 412.76 709.15 403.44 698.03 381.61 C688.02 361.96 696.04 346.87 703.84 342.90 C711.64 338.93 720.32 348.26 723.65 354.80 C720.32 348.26 717.87 335.75 725.67 331.78 C733.47 327.81 750.39 330.18 760.40 349.83 C771.52 371.66 761.26 401.63 758.13 422.48 Z" fill="none" stroke="#f47890" stroke-width="20" opacity="0.9" filter="url(#glow)"/><path d="M758.13 422.48 C739.43 412.76 709.15 403.44 698.03 381.61 C688.02 361.96 696.04 346.87 703.84 342.90 C711.64 338.93 720.32 348.26 723.65 354.80 C720.32 348.26 717.87 335.75 725.67 331.78 C733.47 327.81 750.39 330.18 760.40 349.83 C771.52 371.66 761.26 401.63 758.13 422.48 Z" fill="#ffffff"  /><path d="M175.81 559.87 C169.35 543.83 155.41 521.81 160.25 502.40 C164.60 484.93 177.79 479.98 184.83 481.73 C191.86 483.49 192.26 493.89 190.81 499.71 C192.26 493.89 197.49 484.89 204.53 486.64 C211.56 488.40 220.88 498.97 216.53 516.43 C211.69 535.84 189.04 548.74 175.81 559.87 Z" fill="none" stroke="#f6a8b8" stroke-width="18" opacity="0.7" filter="url(#glow)"/><path d="M175.81 559.87 C169.35 543.83 155.41 521.81 160.25 502.40 C164.60 484.93 177.79 479.98 184.83 481.73 C191.86 483.49 192.26 493.89 190.81 499.71 C192.26 493.89 197.49 484.89 204.53 486.64 C211.56 488.40 220.88 498.97 216.53 516.43 C211.69 535.84 189.04 548.74 175.81 559.87 Z" fill="#ffffff"  /><path d="M447.00 91.50 C443.85 88.00 438.00 83.50 438.00 78.50 C438.00 74.00 441.60 72.00 443.85 72.00 C446.10 72.00 447.00 74.50 447.00 76.00 C447.00 74.50 447.90 72.00 450.15 72.00 C452.40 72.00 456.00 74.00 456.00 78.50 C456.00 83.50 450.15 88.00 447.00 91.50 Z" fill="none" stroke="#f59ab0" stroke-width="4" opacity="0.9" filter="url(#glow)"/><path d="M447.00 91.50 C443.85 88.00 438.00 83.50 438.00 78.50 C438.00 74.00 441.60 72.00 443.85 72.00 C446.10 72.00 447.00 74.50 447.00 76.00 C447.00 74.50 447.90 72.00 450.15 72.00 C452.40 72.00 456.00 74.00 456.00 78.50 C456.00 83.50 450.15 88.00 447.00 91.50 Z" fill="#ffffff" stroke="#f7a8bc" stroke-width="1.8" /><path d="M160.00 318.70 C157.90 316.60 154.00 313.90 154.00 310.90 C154.00 308.20 156.40 307.00 157.90 307.00 C159.40 307.00 160.00 308.50 160.00 309.40 C160.00 308.50 160.60 307.00 162.10 307.00 C163.60 307.00 166.00 308.20 166.00 310.90 C166.00 313.90 162.10 316.60 160.00 318.70 Z" fill="none" stroke="#f3a0b0" stroke-width="1.3" /><path d="M157.00 336.70 C154.90 334.60 151.00 331.90 151.00 328.90 C151.00 326.20 153.40 325.00 154.90 325.00 C156.40 325.00 157.00 326.50 157.00 327.40 C157.00 326.50 157.60 325.00 159.10 325.00 C160.60 325.00 163.00 326.20 163.00 328.90 C163.00 331.90 159.10 334.60 157.00 336.70 Z" fill="none" stroke="#f3a0b0" stroke-width="1.3" /><path d="M765.00 237.75 C763.25 236.00 760.00 233.75 760.00 231.25 C760.00 229.00 762.00 228.00 763.25 228.00 C764.50 228.00 765.00 229.25 765.00 230.00 C765.00 229.25 765.50 228.00 766.75 228.00 C768.00 228.00 770.00 229.00 770.00 231.25 C770.00 233.75 766.75 236.00 765.00 237.75 Z" fill="none" stroke="#f3a0b0" stroke-width="1.3" /><path d="M339.00 433.70 C336.90 431.60 333.00 428.90 333.00 425.90 C333.00 423.20 335.40 422.00 336.90 422.00 C338.40 422.00 339.00 423.50 339.00 424.40 C339.00 423.50 339.60 422.00 341.10 422.00 C342.60 422.00 345.00 423.20 345.00 425.90 C345.00 428.90 341.10 431.60 339.00 433.70 Z" fill="#fff6f6" stroke="#f3a8b8" stroke-width="1.2" /><path d="M373.99 418.61 C371.56 416.91 367.25 414.93 366.73 411.97 C366.26 409.31 368.41 407.72 369.89 407.46 C371.37 407.20 372.22 408.57 372.37 409.45 C372.22 408.57 372.55 406.99 374.03 406.73 C375.50 406.47 378.08 407.23 378.54 409.89 C379.07 412.84 375.69 416.18 373.99 418.61 Z" fill="#fff6f6" stroke="#f3a8b8" stroke-width="1.2" /><path d="M376.18 431.68 C374.76 429.65 371.95 426.87 372.38 424.41 C372.77 422.19 374.91 421.56 376.14 421.77 C377.38 421.99 377.65 423.31 377.52 424.05 C377.65 423.31 378.36 422.16 379.59 422.38 C380.82 422.60 382.62 423.93 382.23 426.14 C381.79 428.61 378.20 430.26 376.18 431.68 Z" fill="#fff6f6" stroke="#f3a8b8" stroke-width="1.2" /><path d="M384.52 424.51 C383.04 421.93 379.97 418.32 380.75 415.42 C381.45 412.81 384.08 412.27 385.52 412.66 C386.97 413.05 387.16 414.65 386.93 415.52 C387.16 414.65 388.13 413.36 389.58 413.75 C391.03 414.14 393.04 415.92 392.34 418.52 C391.56 421.42 387.10 423.02 384.52 424.51 Z" fill="#fff6f6" stroke="#f3a8b8" stroke-width="1.2" /><path d="M229.5 452.3 L772 452.3" stroke="#f0320e" stroke-width="4.4" stroke-linecap="round"/><g stroke="#ff3412" stroke-width="5.5" fill="none" stroke-linecap="round" stroke-linejoin="round"><path d="M337.5 478 Q337 494 335.5 510" stroke-width="6"/><path d="M328 490 Q342 489 356 490.5"/><path d="M352.5 479.5 Q351 492 348.5 505" stroke-width="6"/><path d="M366 495 Q360 494 360 500 Q361 505 366 503 Q369 500 369 496 L369 502"/><path d="M366.5 475.5 L372 476.5" stroke-width="4.5"/><path d="M375 503 L375.5 496 Q381 492 385 499 Q387 494 393 494.5 Q399 496 400 501"/><path d="M334 519 Q337 527 341.5 530 M348.5 522 Q345 531 337 538"/><path d="M355 523 L354.5 531"/><path d="M360 531 L360.5 525 Q367 519 374 523.5 L375 531"/><path d="M382 531 L382.5 525 Q389 519 396 524 L397 531"/><path d="M408 522 L408 530.5"/><path d="M417 522 L417 530.5"/><path d="M329.5 551 L330 568.5" stroke-width="6"/><path d="M327 561 Q335 560 343 561"/><path d="M342.5 552 L341.5 568"/><path d="M352.5 557 Q357 557 357 562 Q356.5 566 352.5 565.5 Q348.5 563 352.5 557"/><path d="M364 552 L364 567"/><path d="M380 558 Q372 557 371.5 563 Q372.5 568 380.5 566 M382 546 L382.5 568"/><path d="M399 558 Q391 556 391 563 Q393 567.5 399 564.5 L400 568"/><path d="M407 552 L407.5 570 M407.5 555 Q414 551 417 557 Q417 563 408 562"/><path d="M423.5 547 Q429 541 432 547 Q431 555 423.5 562 L433 562"/><path d="M439 545 L437.5 557 L450 557 M447.5 545 L448.5 564"/><path d="M454 545.5 L460 545 L461 567"/></g><circle cx="364" cy="545" r="3" fill="#ff3412"/><circle cx="408" cy="514.5" r="3" fill="#ff3412"/><circle cx="417" cy="514.5" r="3" fill="#ff3412"/><circle cx="568.5" cy="562.5" r="3.3" fill="#f0f0f0" stroke="#111" stroke-width="1"/></svg><div style="position:absolute;left:792px;top:47px;width:6px;height:637px;background:#1e1e1e"></div><div style="position:absolute;left:798px;top:47px;width:226px;height:145px;background:#2a2a2a"></div><div style="position:absolute;left:798px;top:45px;width:226px;height:2px;background:#1c222a"></div><div style="position:absolute;left:798px;top:47px;width:226px;height:2px;background:linear-gradient(#6a9cc0,#3c6585)"></div><div style="position:absolute;left:798px;top:49px;width:226px;height:21px;background:#313030;border-bottom:1px solid #262626"></div><div style="position:absolute;left:798px;top:48px;width:198px;height:21px;text-align:center;font-size:11px;line-height:21px;color:#c4c4c4;white-space:nowrap">Hoa tiêu</div><svg style="position:absolute;left:995px;top:53px;" width="10" height="10" viewBox="0 0 10 10"><path d="M1 2.5 V9 H7.5 V5.5" stroke="#c0c0c0" stroke-width="1.2" fill="none"/><path d="M1 2.5 H4 M5 5 L9 1 M6.5 1 H9 V3.5" stroke="#c0c0c0" stroke-width="1.2" fill="none"/></svg><svg style="position:absolute;left:1010px;top:53px;" width="10" height="10" viewBox="0 0 10 10"><path d="M1.5 1.5 L8.5 8.5 M8.5 1.5 L1.5 8.5" stroke="#d4d4d4" stroke-width="2.4"/></svg><div style="position:absolute;left:801px;top:73px;width:23px;height:23px;background:#4a4a4a;border:1px solid #555;border-radius:3px"><svg width="21" height="21" viewBox="0 0 21 21" style="position:absolute;left:0;top:0"><circle cx="9.5" cy="9.5" r="5" stroke="#ddd" stroke-width="1.6" fill="none"/><path d="M13 13 L17 17" stroke="#ddd" stroke-width="2.2"/><text x="9.5" y="12.5" font-size="8" font-weight="bold" fill="#ddd" text-anchor="middle" font-family="Liberation Sans">1</text></svg></div><div style="position:absolute;left:835px;top:73px;width:23px;height:23px;background:#4a4a4a;border:1px solid #555;border-radius:3px"><svg width="21" height="21" viewBox="0 0 21 21" style="position:absolute;left:0;top:0"><circle cx="9.5" cy="9.5" r="5" stroke="#ddd" stroke-width="1.6" fill="none"/><path d="M13 13 L17 17" stroke="#ddd" stroke-width="2.2"/><path d="M7 9.5 H12 M9.5 7 V12" stroke="#ddd" stroke-width="1.6"/></svg></div><div style="position:absolute;left:862px;top:73px;width:24px;height:23px;background:#4a4a4a;border:1px solid #555;border-radius:3px"><svg width="22" height="21" viewBox="0 0 22 21" style="position:absolute;left:0;top:0"><rect x="4" y="4" width="14" height="13" stroke="#ccc" stroke-width="1.2" fill="none"/><path d="M5 5 L9 9 M17 5 L13 9 M5 16 L9 12 M17 16 L13 12" stroke="#ccc" stroke-width="1.2"/></svg></div><div style="position:absolute;left:889px;top:73px;width:24px;height:23px;background:#4a4a4a;border:1px solid #555;border-radius:3px"><svg width="22" height="21" viewBox="0 0 22 21" style="position:absolute;left:0;top:0"><circle cx="9.5" cy="9.5" r="5" stroke="#ddd" stroke-width="1.6" fill="none"/><path d="M13 13 L17 17" stroke="#ddd" stroke-width="2.2"/><path d="M7 9.5 H12" stroke="#ddd" stroke-width="1.6"/></svg></div><div style="position:absolute;left:924px;top:73px;width:23px;height:23px;background:#4a4a4a;border:1px solid #555;border-radius:3px"><svg width="21" height="21" viewBox="0 0 21 21" style="position:absolute;left:0;top:0"><circle cx="11" cy="11" r="7.5" stroke="#ddd" stroke-width="1.8" fill="none" stroke-dasharray="38 10"/><rect x="7" y="8" width="9" height="7" fill="#ddd" transform="rotate(-15 11 11)"/></svg></div><div style="position:absolute;left:951px;top:73px;width:24px;height:23px;background:#2a2a2a;border:1px solid #4a4a4a;border-radius:3px"><svg width="22" height="21" viewBox="0 0 22 21" style="position:absolute;left:0;top:0"><rect x="6.5" y="6.5" width="9" height="8" fill="#eee"/><path d="M3 3 L6 6 M19 3 L16 6 M3 18 L6 15 M19 18 L16 15" stroke="#ccc" stroke-width="1.3"/></svg></div><div style="position:absolute;left:978px;top:73px;width:24px;height:23px;background:#4a4a4a;border:1px solid #555;border-radius:3px"><svg width="22" height="21" viewBox="0 0 22 21" style="position:absolute;left:0;top:0"><circle cx="11" cy="11" r="7.5" stroke="#ddd" stroke-width="1.8" fill="none" stroke-dasharray="38 10" transform="rotate(90 11 11)"/><rect x="7" y="8" width="9" height="7" fill="#ddd" transform="rotate(15 11 11)"/></svg></div><div style="position:absolute;left:829px;top:79px;width:1px;height:11px;background:#555"></div><div style="position:absolute;left:917px;top:79px;width:1px;height:11px;background:#555"></div><div style="position:absolute;left:1013px;top:73px;width:11px;height:23px;background:#4a4a4a;border-radius:4px"></div><div style="position:absolute;left:798px;top:98px;width:226px;height:26px;background:#252525"></div><div style="position:absolute;left:799px;top:108px;width:193px;height:10px;background:#4a4a4a;border-radius:5px"></div><div style="position:absolute;left:888px;top:105px;width:15px;height:15px;background:radial-gradient(circle at 45% 40%,#c0c0c0,#8e8e8e);border-radius:50%"></div><div style="position:absolute;left:1000px;top:107px;font-size:11px;line-height:12.65px;color:#d0d0d0;white-space:nowrap;">0 độ</div><div style="position:absolute;left:798px;top:124px;width:226px;height:67px;background:#484848"></div><svg style="position:absolute;left:870px;top:126px;" width="79" height="64" viewBox="0 0 79 64"><defs><filter id="nb"><feGaussianBlur stdDeviation="2.5"/></filter><filter id="nb1"><feGaussianBlur stdDeviation="0.7"/></filter></defs><rect x="0" y="0" width="79" height="64" fill="#fff"/><path d="M3 14 Q20 4 40 8 Q60 4 76 10 L77 45 Q60 52 40 50 Q20 55 3 48 Z" fill="#f9cfc5" opacity="0.75" filter="url(#nb)"/><g filter="url(#nb1)"><path d="M6 22 L5 36" stroke="#e04a2c" stroke-width="1.8" stroke-linecap="round"/><path d="M11 24 L10 34" stroke="#f0a090" stroke-width="1.5" stroke-linecap="round"/><path d="M42 20 L41 36" stroke="#e04a2c" stroke-width="1.8" stroke-linecap="round"/><path d="M46 19 L45 32" stroke="#f0a090" stroke-width="1.4" stroke-linecap="round"/><path d="M51 21 L50 38" stroke="#d83a1c" stroke-width="1.9" stroke-linecap="round"/><path d="M56 20 L55 34" stroke="#f0a090" stroke-width="1.4" stroke-linecap="round"/><path d="M61 21 L60 37" stroke="#e04a2c" stroke-width="1.8" stroke-linecap="round"/><path d="M66 20 L65 32" stroke="#f0a090" stroke-width="1.4" stroke-linecap="round"/><path d="M71 22 L70 37" stroke="#d83a1c" stroke-width="1.8" stroke-linecap="round"/><path d="M75 22 L74 34" stroke="#f0a090" stroke-width="1.3" stroke-linecap="round"/><circle cx="6" cy="50" r="4.2" fill="#f07a60"/><circle cx="22" cy="15" r="5" fill="#f47a5c" opacity="0.8"/><circle cx="68" cy="9" r="5" fill="#e9a898" opacity="0.8"/><circle cx="73" cy="7" r="3.5" fill="#cc4a30"/><circle cx="33" cy="42" r="3" fill="#f4b0a0" opacity="0.7"/><circle cx="50" cy="46" r="3" fill="#f8c4b8" opacity="0.7"/><circle cx="25" cy="35" r="2" fill="#e84030"/></g><rect x="12.5" y="29.5" width="26" height="25" stroke="#e01010" stroke-width="2" fill="none"/></svg><div style="position:absolute;left:798px;top:195px;width:226px;height:110px;background:#2a2a2a"></div><div style="position:absolute;left:798px;top:193px;width:226px;height:2px;background:#1c222a"></div><div style="position:absolute;left:798px;top:195px;width:226px;height:2px;background:linear-gradient(#6a9cc0,#3c6585)"></div><div style="position:absolute;left:798px;top:197px;width:226px;height:20px;background:#313030;border-bottom:1px solid #262626"></div><div style="position:absolute;left:798px;top:196px;width:198px;height:20px;text-align:center;font-size:11px;line-height:20px;color:#c4c4c4;white-space:nowrap">Bảng màu</div><svg style="position:absolute;left:995px;top:201px;" width="10" height="10" viewBox="0 0 10 10"><path d="M1 2.5 V9 H7.5 V5.5" stroke="#c0c0c0" stroke-width="1.2" fill="none"/><path d="M1 2.5 H4 M5 5 L9 1 M6.5 1 H9 V3.5" stroke="#c0c0c0" stroke-width="1.2" fill="none"/></svg><svg style="position:absolute;left:1010px;top:201px;" width="10" height="10" viewBox="0 0 10 10"><path d="M1.5 1.5 L8.5 8.5 M8.5 1.5 L1.5 8.5" stroke="#d4d4d4" stroke-width="2.4"/></svg><div style="position:absolute;left:799px;top:217px;width:204px;height:56px;background:#484848"></div><div style="position:absolute;left:800.0px;top:219.0px;width:12.5px;height:12.5px;background:#f2453a"></div><div style="position:absolute;left:814.1px;top:219.0px;width:12.5px;height:12.5px;background:#e8236a"></div><div style="position:absolute;left:828.2px;top:219.0px;width:12.5px;height:12.5px;background:#9a2cb0"></div><div style="position:absolute;left:842.3px;top:219.0px;width:12.5px;height:12.5px;background:#4050c0"></div><div style="position:absolute;left:856.4px;top:219.0px;width:12.5px;height:12.5px;background:#2a90f0"></div><div style="position:absolute;left:870.5px;top:219.0px;width:12.5px;height:12.5px;background:#10b8d8"></div><div style="position:absolute;left:884.6px;top:219.0px;width:12.5px;height:12.5px;background:#10968a"></div><div style="position:absolute;left:898.7px;top:219.0px;width:12.5px;height:12.5px;background:#88c048"></div><div style="position:absolute;left:912.8px;top:219.0px;width:12.5px;height:12.5px;background:#ffe030"></div><div style="position:absolute;left:926.9px;top:219.0px;width:12.5px;height:12.5px;background:#ff9810"></div><div style="position:absolute;left:941.0px;top:219.0px;width:12.5px;height:12.5px;background:#6a8294"></div><div style="position:absolute;left:955.1px;top:219.0px;width:12.5px;height:12.5px;background:#a2a2a2"></div><div style="position:absolute;left:969.2px;top:219.0px;width:12.5px;height:12.5px;background:#5aa4e2"></div><div style="position:absolute;left:983.3px;top:219.0px;width:12.5px;height:12.5px;background:#f04838"></div><div style="position:absolute;left:800.0px;top:233.2px;width:12.5px;height:12.5px;background:#e8236a"></div><div style="position:absolute;left:814.1px;top:233.2px;width:12.5px;height:12.5px;background:#9a2cb0"></div><div style="position:absolute;left:828.2px;top:233.2px;width:12.5px;height:12.5px;background:#4050c0"></div><div style="position:absolute;left:842.3px;top:233.2px;width:12.5px;height:12.5px;background:#2a90f0"></div><div style="position:absolute;left:856.4px;top:233.2px;width:12.5px;height:12.5px;background:#10b8d8"></div><div style="position:absolute;left:870.5px;top:233.2px;width:12.5px;height:12.5px;background:#10968a"></div><div style="position:absolute;left:884.6px;top:233.2px;width:12.5px;height:12.5px;background:#88c048"></div><div style="position:absolute;left:898.7px;top:233.2px;width:12.5px;height:12.5px;background:#ffe030"></div><div style="position:absolute;left:912.8px;top:233.2px;width:12.5px;height:12.5px;background:#ff9810"></div><div style="position:absolute;left:926.9px;top:233.2px;width:12.5px;height:12.5px;background:#6a8294"></div><div style="position:absolute;left:941.0px;top:233.2px;width:12.5px;height:12.5px;background:#a2a2a2"></div><div style="position:absolute;left:955.1px;top:233.2px;width:12.5px;height:12.5px;background:#5aa4e2"></div><div style="position:absolute;left:969.2px;top:233.2px;width:12.5px;height:12.5px;background:#fff5c0"></div><div style="position:absolute;left:983.3px;top:233.2px;width:12.5px;height:12.5px;background:#4a5cd0"></div><div style="position:absolute;left:800.0px;top:247.4px;width:12.5px;height:12.5px;background:#a050d0"></div><div style="position:absolute;left:814.1px;top:247.4px;width:12.5px;height:12.5px;background:#aa1008"></div><div style="position:absolute;left:828.2px;top:247.4px;width:12.5px;height:12.5px;background:#ffd4c4"></div><div style="position:absolute;left:842.3px;top:247.4px;width:12.5px;height:12.5px;background:#6060f8"></div><div style="position:absolute;left:856.4px;top:247.4px;width:12.5px;height:12.5px;background:#ffdcc4"></div><div style="position:absolute;left:1003px;top:217px;width:20px;height:56px;background:#2c2c2c"></div><svg style="position:absolute;left:1007px;top:221px;" width="11" height="8" viewBox="0 0 11 8"><path d="M0.5 7 L5.5 1 L10.5 7 Z" fill="#8a8a8a"/></svg><div style="position:absolute;left:1005px;top:230px;width:16px;height:31px;background:linear-gradient(to right,#6e6e6e,#8c8c8c,#6e6e6e);border-radius:6px"></div><svg style="position:absolute;left:1007px;top:264px;" width="11" height="8" viewBox="0 0 11 8"><path d="M0.5 1 L5.5 7 L10.5 1 Z" fill="#8a8a8a"/></svg><div style="position:absolute;left:799px;top:273px;width:224px;height:30px;background:#262626;border:1px solid #3a3a3a"></div><div style="position:absolute;left:803px;top:277px;width:23px;height:23px;background:#4a4a4a;border:1px solid #555;border-radius:3px"><svg width="21" height="21" viewBox="0 0 21 21" style="position:absolute;left:0;top:0"><path d="M5 3 H12 L16 7 V19 H5 Z" stroke="#dadada" stroke-width="1.3" fill="#4a4a4a"/></svg></div><div style="position:absolute;left:830px;top:277px;width:23px;height:23px;background:#2a2a2a;border:1px solid #555;border-radius:3px"><svg width="21" height="21" viewBox="0 0 21 21" style="position:absolute;left:0;top:0"><path d="M5 6 H17 M9 6 V4 H13 V6 M6 8 H16 L15 19 H7 Z M9 10 V17 M11 10 V17 M13 10 V17" stroke="#dadada" stroke-width="1.4" fill="none"/></svg></div><div style="position:absolute;left:858px;top:282px;width:1px;height:13px;background:#555"></div><div style="position:absolute;left:864px;top:283px;font-size:10px;line-height:11.5px;color:#c0c0c0;white-space:nowrap;">---</div><div style="position:absolute;left:798px;top:311px;width:226px;height:373px;background:#2a2a2a"></div><div style="position:absolute;left:798px;top:309px;width:226px;height:2px;background:#1c222a"></div><div style="position:absolute;left:798px;top:311px;width:226px;height:2px;background:linear-gradient(#6a9cc0,#3c6585)"></div><div style="position:absolute;left:798px;top:313px;width:226px;height:20px;background:#313030;border-bottom:1px solid #262626"></div><div style="position:absolute;left:798px;top:312px;width:198px;height:20px;text-align:center;font-size:11px;line-height:20px;color:#c4c4c4;white-space:nowrap">Lớp</div><svg style="position:absolute;left:995px;top:317px;" width="10" height="10" viewBox="0 0 10 10"><path d="M1 2.5 V9 H7.5 V5.5" stroke="#c0c0c0" stroke-width="1.2" fill="none"/><path d="M1 2.5 H4 M5 5 L9 1 M6.5 1 H9 V3.5" stroke="#c0c0c0" stroke-width="1.2" fill="none"/></svg><svg style="position:absolute;left:1010px;top:317px;" width="10" height="10" viewBox="0 0 10 10"><path d="M1.5 1.5 L8.5 8.5 M8.5 1.5 L1.5 8.5" stroke="#d4d4d4" stroke-width="2.4"/></svg><div style="position:absolute;left:803px;top:341px;font-size:11px;line-height:12.65px;color:#c8c8c8;white-space:nowrap;">Độ trong</div><div style="position:absolute;left:857px;top:338px;width:123px;height:16px;background:linear-gradient(to right,#7cc0f4,#4b9ad8);border:1px solid #3a70a0"></div><div style="position:absolute;left:986px;top:341px;font-size:11px;line-height:12.65px;color:#c8c8c8;white-space:nowrap;">100 %</div><div style="position:absolute;left:802px;top:366px;font-size:11px;line-height:12.65px;color:#c8c8c8;white-space:nowrap;">Pha trộn</div><div style="position:absolute;left:862px;top:361px;width:156px;height:21px;background:#4a4a4a;border-radius:3px"></div><div style="position:absolute;left:864px;top:366px;font-size:11px;line-height:12.65px;color:#c0c0c0;white-space:nowrap;">Bình thường</div><svg style="position:absolute;left:1005px;top:370px;" width="8" height="5" viewBox="0 0 8 5"><path d="M0 0 H8 L4 4 Z" fill="#bbb"/></svg><div style="position:absolute;left:806px;top:393px;width:11px;height:11px;border:1px solid #c8c8c8"></div><div style="position:absolute;left:822px;top:392px;font-size:10.8px;line-height:12.42px;color:#c8c8c8;white-space:nowrap;">Bảo vệ alpha</div><div style="position:absolute;left:898px;top:393px;width:11px;height:11px;border:1px solid #c8c8c8"></div><div style="position:absolute;left:914px;top:392px;font-size:10.8px;line-height:12.42px;color:#c8c8c8;white-space:nowrap;">Xén bớt</div><div style="position:absolute;left:964px;top:393px;width:11px;height:11px;border:1px solid #c8c8c8"></div><div style="position:absolute;left:980px;top:392px;font-size:10.8px;line-height:12.42px;color:#c8c8c8;white-space:nowrap;">Khóa</div><div style="position:absolute;left:799px;top:412px;width:202px;height:241px;background:#262626"></div><div style="position:absolute;left:800px;top:412px;width:200px;height:5px;background:#5a5a5a"></div><div style="position:absolute;left:800px;top:417.5px;width:200px;height:39.4px;background:#5a5a5a;overflow:hidden"><div style="position:absolute;left:4px;top:15px;width:10px;height:10px;border-radius:50%;background:radial-gradient(circle at 50% 45%,#f0f0f0,#c8c8c8)"></div><div style="position:absolute;left:34px;top:6px;width:35px;height:27px;background:repeating-conic-gradient(#dcdcdc 0 25%,#ffffff 0 50%) 0 0/8px 8px;overflow:hidden"></div><div style="position:absolute;left:85px;top:13px;font-size:11.5px;line-height:14px;color:#e8e8e8">Lớp7</div></div><div style="position:absolute;left:800px;top:456.9px;width:200px;height:1px;background:#2e2e2e"></div><div style="position:absolute;left:800px;top:457.9px;width:200px;height:39.4px;background:#5a5a5a;overflow:hidden"><div style="position:absolute;left:4px;top:15px;width:10px;height:10px;border-radius:50%;background:radial-gradient(circle at 50% 45%,#f0f0f0,#c8c8c8)"></div><div style="position:absolute;left:34px;top:6px;width:35px;height:27px;background:repeating-conic-gradient(#dcdcdc 0 25%,#ffffff 0 50%) 0 0/8px 8px;overflow:hidden"><svg width="35" height="27" style="position:absolute;left:0;top:0"><rect x="2.0" y="11" width="1.6" height="3" fill="#e04030"/><rect x="4.6" y="12" width="1.6" height="6" fill="#e04030"/><rect x="7.2" y="13" width="1.6" height="5" fill="#e04030"/><rect x="9.8" y="11" width="1.6" height="4" fill="#e04030"/><rect x="12.4" y="12" width="1.6" height="3" fill="#e04030"/><rect x="15.0" y="13" width="1.6" height="6" fill="#e04030"/><rect x="17.6" y="11" width="1.6" height="5" fill="#e04030"/><rect x="20.2" y="12" width="1.6" height="4" fill="#e04030"/><rect x="22.8" y="13" width="1.6" height="3" fill="#e04030"/><rect x="25.4" y="11" width="1.6" height="6" fill="#e04030"/><rect x="28.0" y="12" width="1.6" height="5" fill="#e04030"/><rect x="30.6" y="13" width="1.6" height="4" fill="#e04030"/></svg></div><div style="position:absolute;left:85px;top:13px;font-size:11.5px;line-height:14px;color:#e8e8e8">Lớp2</div></div><div style="position:absolute;left:800px;top:497.3px;width:200px;height:1px;background:#2e2e2e"></div><div style="position:absolute;left:800px;top:498.3px;width:200px;height:39.4px;background:#5a5a5a;overflow:hidden"><div style="position:absolute;left:4px;top:15px;width:10px;height:10px;border-radius:50%;background:radial-gradient(circle at 50% 45%,#f0f0f0,#c8c8c8)"></div><div style="position:absolute;left:34px;top:6px;width:35px;height:27px;background:repeating-conic-gradient(#dcdcdc 0 25%,#ffffff 0 50%) 0 0/8px 8px;overflow:hidden"><svg width="35" height="27" style="position:absolute;left:0;top:0"><rect x="2.0" y="11" width="1.6" height="3" fill="#e04030"/><rect x="4.6" y="12" width="1.6" height="6" fill="#e04030"/><rect x="7.2" y="13" width="1.6" height="5" fill="#e04030"/><rect x="9.8" y="11" width="1.6" height="4" fill="#e04030"/><rect x="12.4" y="12" width="1.6" height="3" fill="#e04030"/><rect x="15.0" y="13" width="1.6" height="6" fill="#e04030"/><rect x="17.6" y="11" width="1.6" height="5" fill="#e04030"/><rect x="20.2" y="12" width="1.6" height="4" fill="#e04030"/><rect x="22.8" y="13" width="1.6" height="3" fill="#e04030"/><rect x="25.4" y="11" width="1.6" height="6" fill="#e04030"/><rect x="28.0" y="12" width="1.6" height="5" fill="#e04030"/><rect x="30.6" y="13" width="1.6" height="4" fill="#e04030"/></svg></div><div style="position:absolute;left:85px;top:13px;font-size:11.5px;line-height:14px;color:#e8e8e8">Lớp2</div></div><div style="position:absolute;left:800px;top:537.7px;width:200px;height:1px;background:#2e2e2e"></div><div style="position:absolute;left:800px;top:538.7px;width:200px;height:39.4px;background:#5a5a5a;overflow:hidden"><div style="position:absolute;left:4px;top:15px;width:10px;height:10px;border-radius:50%;background:radial-gradient(circle at 50% 45%,#f0f0f0,#c8c8c8)"></div><div style="position:absolute;left:34px;top:6px;width:35px;height:27px;background:repeating-conic-gradient(#dcdcdc 0 25%,#ffffff 0 50%) 0 0/8px 8px;overflow:hidden"><svg width="35" height="27" style="position:absolute;left:0;top:0"><circle cx="2" cy="2" r="2.5" fill="#f08070" opacity="0.7"/><circle cx="15" cy="9" r="3.5" fill="#f08070" opacity="0.7"/><circle cx="28" cy="16" r="4.5" fill="#f08070" opacity="0.7"/><circle cx="8" cy="23" r="2.5" fill="#f08070" opacity="0.7"/><circle cx="21" cy="6" r="3.5" fill="#f08070" opacity="0.7"/><circle cx="34" cy="13" r="4.5" fill="#f08070" opacity="0.7"/><circle cx="14" cy="20" r="2.5" fill="#f08070" opacity="0.7"/><circle cx="27" cy="3" r="3.5" fill="#f08070" opacity="0.7"/><circle cx="7" cy="10" r="4.5" fill="#f08070" opacity="0.7"/><circle cx="20" cy="17" r="2.5" fill="#f08070" opacity="0.7"/><circle cx="33" cy="24" r="3.5" fill="#f08070" opacity="0.7"/><circle cx="13" cy="7" r="4.5" fill="#f08070" opacity="0.7"/><circle cx="26" cy="14" r="2.5" fill="#f08070" opacity="0.7"/><circle cx="6" cy="21" r="3.5" fill="#f08070" opacity="0.7"/></svg></div><div style="position:absolute;left:85px;top:13px;font-size:11.5px;line-height:14px;color:#e8e8e8">Lớp6</div></div><div style="position:absolute;left:800px;top:578.1px;width:200px;height:1px;background:#2e2e2e"></div><div style="position:absolute;left:800px;top:579.1px;width:200px;height:39.4px;background:#5a5a5a;overflow:hidden"><div style="position:absolute;left:4px;top:15px;width:10px;height:10px;border-radius:50%;background:radial-gradient(circle at 50% 45%,#f0f0f0,#c8c8c8)"></div><div style="position:absolute;left:34px;top:6px;width:35px;height:27px;background:repeating-conic-gradient(#dcdcdc 0 25%,#ffffff 0 50%) 0 0/8px 8px;overflow:hidden"><svg width="35" height="27" style="position:absolute;left:0;top:0"><circle cx="8" cy="10" r="2.5" fill="#e05040"/><circle cx="30" cy="4" r="3" fill="#d03020"/><circle cx="3" cy="22" r="2" fill="#e05040"/><circle cx="22" cy="21" r="2" fill="#f08070"/><circle cx="18" cy="8" r="1.5" fill="#f08070"/></svg></div><div style="position:absolute;left:85px;top:13px;font-size:11.5px;line-height:14px;color:#e8e8e8">Lớp5</div></div><div style="position:absolute;left:800px;top:618.5px;width:200px;height:1px;background:#2e2e2e"></div><div style="position:absolute;left:800px;top:619.5px;width:200px;height:33.5px;background:#5a5a5a;overflow:hidden"><div style="position:absolute;left:4px;top:15px;width:10px;height:10px;border-radius:50%;background:radial-gradient(circle at 50% 45%,#f0f0f0,#c8c8c8)"></div><div style="position:absolute;left:34px;top:6px;width:35px;height:27px;background:repeating-conic-gradient(#dcdcdc 0 25%,#ffffff 0 50%) 0 0/8px 8px;overflow:hidden"></div><div style="position:absolute;left:85px;top:13px;font-size:11.5px;line-height:14px;color:#e8e8e8">Lớp4</div></div><div style="position:absolute;left:1002px;top:412px;width:21px;height:241px;background:#2c2c2c"></div><svg style="position:absolute;left:1007px;top:415px;" width="11" height="8" viewBox="0 0 11 8"><path d="M0.5 7 L5.5 1 L10.5 7 Z" fill="#8a8a8a"/></svg><div style="position:absolute;left:1003px;top:426px;width:18px;height:219px;background:linear-gradient(to right,#333,#3e3e3e,#333);border-radius:7px"></div><div style="position:absolute;left:1003px;top:469px;width:18px;height:144px;background:linear-gradient(to right,#6e6e6e,#8c8c8c,#6e6e6e);border-radius:7px"></div><svg style="position:absolute;left:1007px;top:642px;" width="11" height="8" viewBox="0 0 11 8"><path d="M0.5 1 L5.5 7 L10.5 1 Z" fill="#8a8a8a"/></svg><div style="position:absolute;left:799px;top:653px;width:224px;height:30px;background:#262626"></div><div style="position:absolute;left:803px;top:657px;width:22px;height:23px;background:#4a4a4a;border:1px solid #545454;border-radius:3px"><svg width="20" height="21" viewBox="0 0 20 21" style="position:absolute;left:0;top:0"><path d="M6 3 H13 L17 7 V19 H6 Z" stroke="#dadada" stroke-width="1.3" fill="none"/></svg></div><div style="position:absolute;left:830px;top:657px;width:22px;height:23px;background:#4a4a4a;border:1px solid #545454;border-radius:3px"><svg width="20" height="21" viewBox="0 0 20 21" style="position:absolute;left:0;top:0"><path d="M6 3 H13 L17 7 V19 H6 Z" stroke="#dadada" stroke-width="1.3" fill="none"/><text x="11.5" y="16" font-size="9" fill="#dadada" text-anchor="middle" font-family="Liberation Sans">8</text></svg></div><div style="position:absolute;left:857px;top:657px;width:24px;height:23px;background:#4a4a4a;border:1px solid #545454;border-radius:3px"><svg width="22" height="21" viewBox="0 0 22 21" style="position:absolute;left:0;top:0"><path d="M6 3 H13 L17 7 V19 H6 Z" stroke="#dadada" stroke-width="1.3" fill="none"/><text x="11.5" y="16" font-size="9" fill="#dadada" text-anchor="middle" font-family="Liberation Sans">1</text></svg></div><div style="position:absolute;left:884px;top:657px;width:30px;height:23px;background:#4a4a4a;border:1px solid #545454;border-radius:3px"><svg width="28" height="21" viewBox="0 0 28 21" style="position:absolute;left:0;top:0"><path d="M5 3 H12 L16 7 V13 M5 3 V19 H10" stroke="#dadada" stroke-width="1.3" fill="none"/><path d="M13 13 V20 M9.5 16.5 H16.5" stroke="#dadada" stroke-width="1.8"/><path d="M20 9 H27 L23.5 13 Z" fill="#dadada"/></svg></div><div style="position:absolute;left:919px;top:657px;width:23px;height:23px;background:#4a4a4a;border:1px solid #545454;border-radius:3px"><svg width="21" height="21" viewBox="0 0 21 21" style="position:absolute;left:0;top:0"><path d="M3 6 H9 L11 8 H19 V18 H3 Z" fill="#dadada"/></svg></div><div style="position:absolute;left:953px;top:657px;width:24px;height:23px;background:#4a4a4a;border:1px solid #545454;border-radius:3px"><svg width="22" height="21" viewBox="0 0 22 21" style="position:absolute;left:0;top:0"><rect x="4" y="8" width="10" height="10" stroke="#dadada" stroke-width="1.3" fill="none"/><path d="M7 8 V5 H17 V15 H14" stroke="#dadada" stroke-width="1.3" fill="none"/></svg></div><div style="position:absolute;left:980px;top:657px;width:24px;height:23px;background:#4a4a4a;border:1px solid #545454;border-radius:3px"><svg width="22" height="21" viewBox="0 0 22 21" style="position:absolute;left:0;top:0"><rect x="4" y="3" width="6" height="5" fill="#dadada"/><rect x="4" y="14" width="6" height="5" fill="#dadada"/><rect x="13" y="8" width="7" height="6" fill="#dadada"/><path d="M7 8 V14 M10 11 H13" stroke="#dadada" stroke-width="1.2"/></svg></div><div style="position:absolute;left:947px;top:662px;width:1px;height:13px;background:#555"></div><div style="position:absolute;left:1011px;top:657px;width:8px;height:23px;background:#3a3a3a;border-radius:4px"></div></body></html>
